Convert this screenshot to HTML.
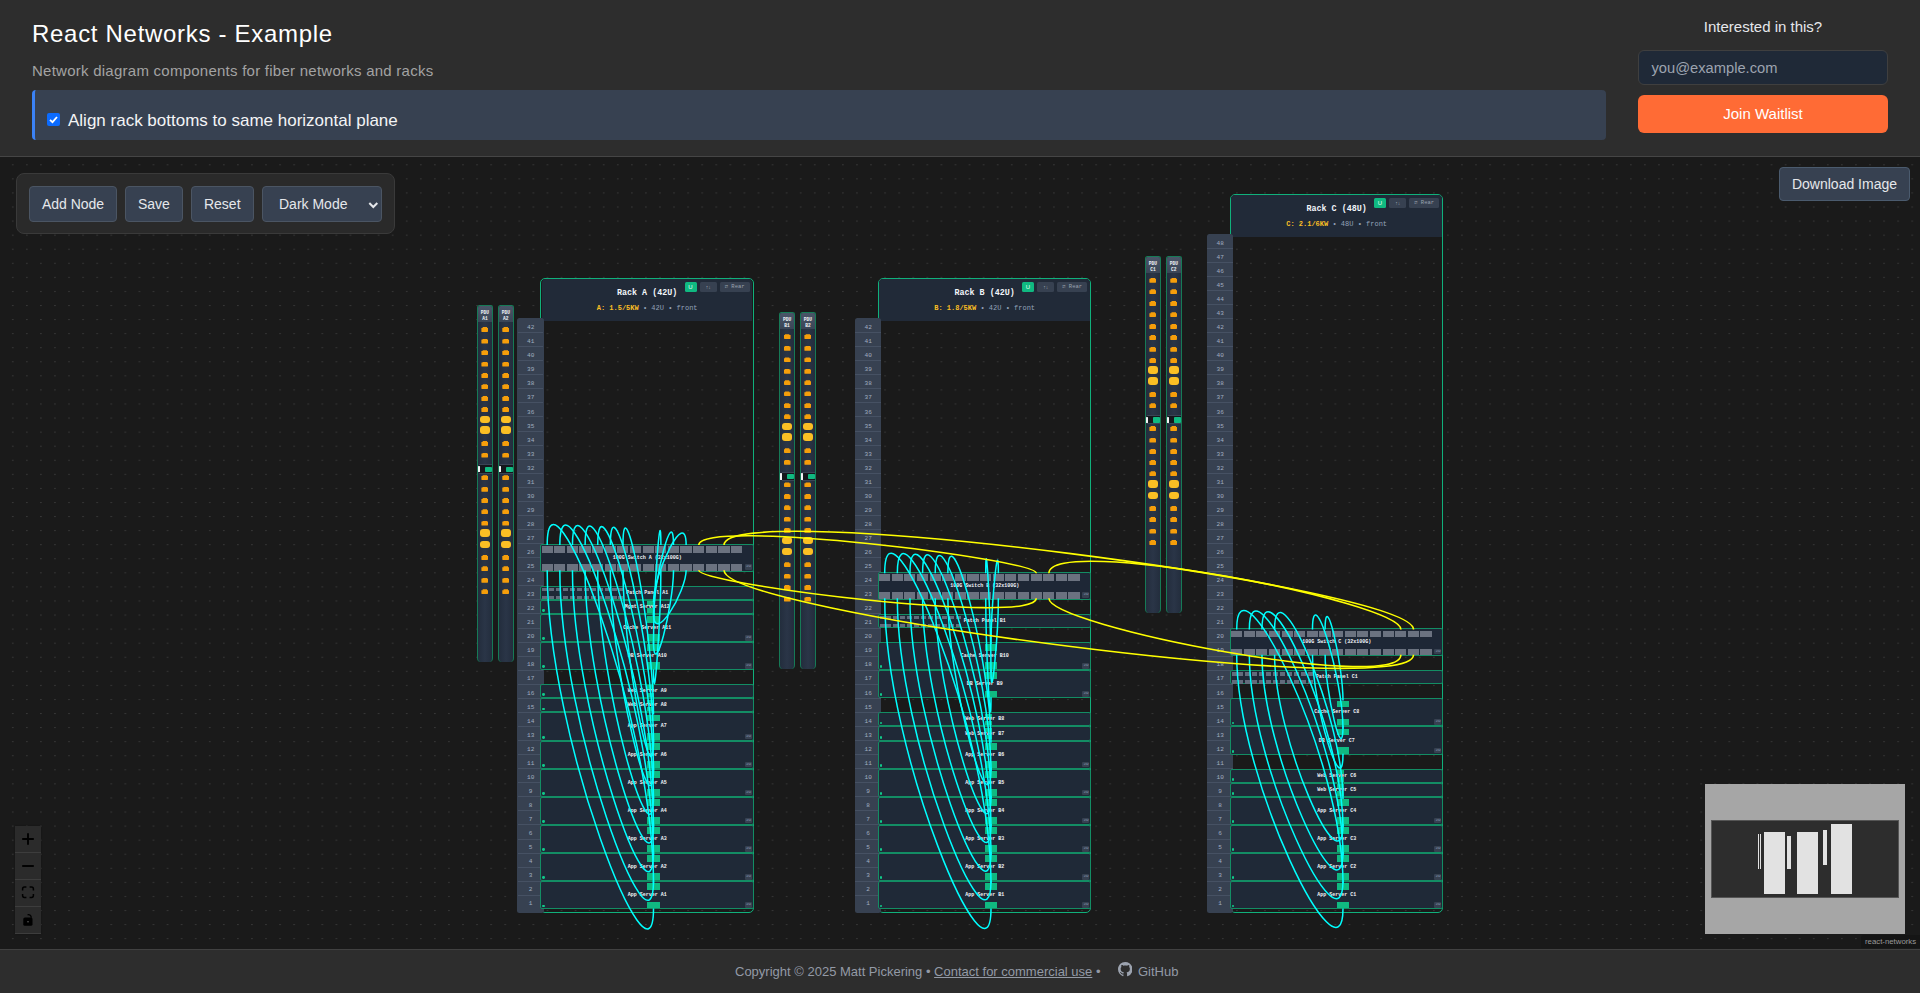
<!DOCTYPE html><html><head><meta charset="utf-8"><style>
*{box-sizing:border-box;}
html,body{margin:0;padding:0;width:1920px;height:993px;overflow:hidden;background:#1a1a1a;font-family:"Liberation Sans",sans-serif;}
.a{position:absolute;}
#hdr{left:0;top:0;width:1920px;height:157px;background:#2d2d2d;border-bottom:1px solid #454545;}
#title{left:32px;top:20px;font-size:24px;letter-spacing:0.7px;color:#fff;white-space:nowrap;}
#sub{left:32px;top:62px;font-size:15px;letter-spacing:0.25px;color:#a3a3a3;white-space:nowrap;}
#bar{left:32px;top:90px;width:1574px;height:50px;background:#374151;border-left:3px solid #3b82f6;border-radius:4px;}
#cb{left:47px;top:113px;width:13px;height:13px;background:#0b6bff;border-radius:2px;}
#cbt{left:68px;top:111px;font-size:17px;color:#f3f4f6;white-space:nowrap;}
#int{left:1638px;width:250px;top:18px;text-align:center;font-size:15px;color:#e5e7eb;}
#email{left:1638px;top:50px;width:250px;height:35px;background:#1f2937;border:1px solid #3f3f3f;border-radius:6px;color:#9ca3af;font-size:14.7px;padding:9px 0 0 12.5px;}
#join{left:1638px;top:95px;width:250px;height:38px;background:#ff6b35;border-radius:6px;color:#fff;font-size:15px;text-align:center;padding-top:10px;}
#ftr{left:0;top:949px;width:1920px;height:44px;background:#2d2d2d;border-top:1px solid #414141;}
.btn{background:#374151;border:1px solid #4b5563;border-radius:4px;color:#e5e7eb;font-size:14px;text-align:center;}
.mono{font-family:"Liberation Mono",monospace;}
.rk{border:1.4px solid #10b07b;border-radius:5px;}
.rh{background:#212a38;}
.ucol{background:#374151;border-radius:2.5px;}
.ur{border-top:1px solid #465163;color:#a0aec0;font-size:6.1px;text-align:center;}
.dev{background:#1f2937;border:1.25px solid #138d64;border-radius:2px;}
.pdu{background:linear-gradient(90deg,#232d3d,#2a3547 50%,#232d3d);border:1px solid #167a56;border-bottom:none;border-radius:2.5px 2.5px 4px 4px;}
.out{background:#f59e0b;border-radius:0.8px;clip-path:polygon(18% 0,82% 0,82% 18%,100% 18%,100% 100%,0 100%,0 18%,18% 18%);}
.outb{background:#fbbf24;border-radius:3px;}
.sp{background:#6b7280;}
.hp{background:#10b981;}
.lbl{color:#f1f5f9;font-weight:bold;font-size:5px;line-height:6px;white-space:nowrap;text-align:center;}
</style></head><body><div id="hdr" class="a"></div><div id="title" class="a">React Networks - Example</div><div id="sub" class="a">Network diagram components for fiber networks and racks</div><div id="bar" class="a"></div><div id="cb" class="a"><svg width="13" height="13" style="position:absolute;left:0;top:0"><path d="M3 6.8 L5.5 9.2 L10 4" stroke="#fff" stroke-width="1.8" fill="none"/></svg></div><div id="cbt" class="a">Align rack bottoms to same horizontal plane</div><div id="int" class="a">Interested in this?</div><div id="email" class="a">you@example.com</div><div id="join" class="a">Join Waitlist</div><svg class="a" style="left:0;top:157px" width="1920" height="791"><defs><pattern id="dots" patternUnits="userSpaceOnUse" x="11.9" y="7.3" width="14.07" height="14.07"><rect x="0" y="0" width="1.7" height="1" fill="#373737"/></pattern></defs><rect width="1920" height="791" fill="#1a1a1a"/><rect width="1920" height="791" fill="url(#dots)"/></svg><div class="a pdu" style="left:477.1px;top:305.2px;width:15.6px;height:356.5px"></div><div class="a" style="left:478.1px;top:306.2px;width:13.6px;height:16px;background:linear-gradient(#4a5568,#3a4556);border-radius:2px 2px 0 0"></div><div class="a mono" style="left:477.1px;top:309.8px;width:15.6px;font-size:4.6px;line-height:6.1px;color:#f1f5f9;text-align:center;font-weight:bold">PDU<br>A1</div><div class="a out" style="left:481.4px;top:327px;width:7px;height:5px"></div><div class="a out" style="left:481.4px;top:338.5px;width:7px;height:5px"></div><div class="a out" style="left:481.4px;top:350.2px;width:7px;height:5px"></div><div class="a out" style="left:481.4px;top:361.5px;width:7px;height:5px"></div><div class="a out" style="left:481.4px;top:373.1px;width:7px;height:5px"></div><div class="a out" style="left:481.4px;top:384.2px;width:7px;height:5px"></div><div class="a out" style="left:481.4px;top:396px;width:7px;height:5px"></div><div class="a out" style="left:481.4px;top:407.1px;width:7px;height:5px"></div><div class="a outb" style="left:479.65px;top:415.65px;width:10.5px;height:7.5px"></div><div class="a outb" style="left:479.65px;top:426.25px;width:10.5px;height:7.5px"></div><div class="a out" style="left:481.4px;top:441.1px;width:7px;height:5px"></div><div class="a out" style="left:481.4px;top:452.5px;width:7px;height:5px"></div><div class="a out" style="left:481.4px;top:475.2px;width:7px;height:5px"></div><div class="a out" style="left:481.4px;top:486.7px;width:7px;height:5px"></div><div class="a out" style="left:481.4px;top:498.1px;width:7px;height:5px"></div><div class="a out" style="left:481.4px;top:509.3px;width:7px;height:5px"></div><div class="a out" style="left:481.4px;top:520.5px;width:7px;height:5px"></div><div class="a outb" style="left:479.65px;top:529.45px;width:10.5px;height:7.5px"></div><div class="a outb" style="left:479.65px;top:540.75px;width:10.5px;height:7.5px"></div><div class="a out" style="left:481.4px;top:555.1px;width:7px;height:5px"></div><div class="a out" style="left:481.4px;top:566.3px;width:7px;height:5px"></div><div class="a out" style="left:481.4px;top:577.7px;width:7px;height:5px"></div><div class="a out" style="left:481.4px;top:589.3px;width:7px;height:5px"></div><div class="a" style="left:479.4px;top:464.4px;width:12.3px;height:9.3px;background:#15171c;border-top:0.6px solid #3a4455;border-bottom:0.6px solid #3a4455"></div><div class="a" style="left:477.6px;top:465.9px;width:2.4px;height:6.6px;background:#f3f4f6;border-radius:0.5px"></div><div class="a" style="left:484.7px;top:466.5px;width:7.2px;height:5.5px;background:#10b981;border-radius:0.8px"></div><div class="a pdu" style="left:498px;top:305.2px;width:15.6px;height:356.5px"></div><div class="a" style="left:499px;top:306.2px;width:13.6px;height:16px;background:linear-gradient(#4a5568,#3a4556);border-radius:2px 2px 0 0"></div><div class="a mono" style="left:498px;top:309.8px;width:15.6px;font-size:4.6px;line-height:6.1px;color:#f1f5f9;text-align:center;font-weight:bold">PDU<br>A2</div><div class="a out" style="left:502.3px;top:327px;width:7px;height:5px"></div><div class="a out" style="left:502.3px;top:338.5px;width:7px;height:5px"></div><div class="a out" style="left:502.3px;top:350.2px;width:7px;height:5px"></div><div class="a out" style="left:502.3px;top:361.5px;width:7px;height:5px"></div><div class="a out" style="left:502.3px;top:373.1px;width:7px;height:5px"></div><div class="a out" style="left:502.3px;top:384.2px;width:7px;height:5px"></div><div class="a out" style="left:502.3px;top:396px;width:7px;height:5px"></div><div class="a out" style="left:502.3px;top:407.1px;width:7px;height:5px"></div><div class="a outb" style="left:500.55px;top:415.65px;width:10.5px;height:7.5px"></div><div class="a outb" style="left:500.55px;top:426.25px;width:10.5px;height:7.5px"></div><div class="a out" style="left:502.3px;top:441.1px;width:7px;height:5px"></div><div class="a out" style="left:502.3px;top:452.5px;width:7px;height:5px"></div><div class="a out" style="left:502.3px;top:475.2px;width:7px;height:5px"></div><div class="a out" style="left:502.3px;top:486.7px;width:7px;height:5px"></div><div class="a out" style="left:502.3px;top:498.1px;width:7px;height:5px"></div><div class="a out" style="left:502.3px;top:509.3px;width:7px;height:5px"></div><div class="a out" style="left:502.3px;top:520.5px;width:7px;height:5px"></div><div class="a outb" style="left:500.55px;top:529.45px;width:10.5px;height:7.5px"></div><div class="a outb" style="left:500.55px;top:540.75px;width:10.5px;height:7.5px"></div><div class="a out" style="left:502.3px;top:555.1px;width:7px;height:5px"></div><div class="a out" style="left:502.3px;top:566.3px;width:7px;height:5px"></div><div class="a out" style="left:502.3px;top:577.7px;width:7px;height:5px"></div><div class="a out" style="left:502.3px;top:589.3px;width:7px;height:5px"></div><div class="a" style="left:500.3px;top:464.4px;width:12.3px;height:9.3px;background:#15171c;border-top:0.6px solid #3a4455;border-bottom:0.6px solid #3a4455"></div><div class="a" style="left:498.5px;top:465.9px;width:2.4px;height:6.6px;background:#f3f4f6;border-radius:0.5px"></div><div class="a" style="left:505.6px;top:466.5px;width:7.2px;height:5.5px;background:#10b981;border-radius:0.8px"></div><div class="a rk" style="left:540.4px;top:277.9px;width:213.5px;height:634.9px"></div><div class="a rh" style="left:541.8px;top:279.3px;width:210.7px;height:41.9px;border-radius:4px 4px 0 0"></div><div class="a ucol" style="left:517.4px;top:318.46px;width:26.3px;height:594.34px"></div><div class="a mono" style="left:517.8px;top:319.22px;width:25.6px;height:14.07px;line-height:17.87px;padding-left:0.2px;color:#a0aec0;font-size:6.1px;text-align:center">42</div><div class="a" style="left:517.8px;top:332.03px;width:25.6px;height:1px;background:#465163"></div><div class="a mono" style="left:517.8px;top:333.27px;width:25.6px;height:14.07px;line-height:17.87px;padding-left:0.2px;color:#a0aec0;font-size:6.1px;text-align:center">41</div><div class="a" style="left:517.8px;top:346.1px;width:25.6px;height:1px;background:#465163"></div><div class="a mono" style="left:517.8px;top:347.32px;width:25.6px;height:14.07px;line-height:17.87px;padding-left:0.2px;color:#a0aec0;font-size:6.1px;text-align:center">40</div><div class="a" style="left:517.8px;top:360.17px;width:25.6px;height:1px;background:#465163"></div><div class="a mono" style="left:517.8px;top:361.37px;width:25.6px;height:14.07px;line-height:17.87px;padding-left:0.2px;color:#a0aec0;font-size:6.1px;text-align:center">39</div><div class="a" style="left:517.8px;top:374.24px;width:25.6px;height:1px;background:#465163"></div><div class="a mono" style="left:517.8px;top:375.42px;width:25.6px;height:14.07px;line-height:17.87px;padding-left:0.2px;color:#a0aec0;font-size:6.1px;text-align:center">38</div><div class="a" style="left:517.8px;top:388.31px;width:25.6px;height:1px;background:#465163"></div><div class="a mono" style="left:517.8px;top:389.47px;width:25.6px;height:14.07px;line-height:17.87px;padding-left:0.2px;color:#a0aec0;font-size:6.1px;text-align:center">37</div><div class="a" style="left:517.8px;top:402.38px;width:25.6px;height:1px;background:#465163"></div><div class="a mono" style="left:517.8px;top:403.51px;width:25.6px;height:14.07px;line-height:17.87px;padding-left:0.2px;color:#a0aec0;font-size:6.1px;text-align:center">36</div><div class="a" style="left:517.8px;top:416.45px;width:25.6px;height:1px;background:#465163"></div><div class="a mono" style="left:517.8px;top:417.56px;width:25.6px;height:14.07px;line-height:17.87px;padding-left:0.2px;color:#a0aec0;font-size:6.1px;text-align:center">35</div><div class="a" style="left:517.8px;top:430.52px;width:25.6px;height:1px;background:#465163"></div><div class="a mono" style="left:517.8px;top:431.61px;width:25.6px;height:14.07px;line-height:17.87px;padding-left:0.2px;color:#a0aec0;font-size:6.1px;text-align:center">34</div><div class="a" style="left:517.8px;top:444.59px;width:25.6px;height:1px;background:#465163"></div><div class="a mono" style="left:517.8px;top:445.66px;width:25.6px;height:14.07px;line-height:17.87px;padding-left:0.2px;color:#a0aec0;font-size:6.1px;text-align:center">33</div><div class="a" style="left:517.8px;top:458.66px;width:25.6px;height:1px;background:#465163"></div><div class="a mono" style="left:517.8px;top:459.71px;width:25.6px;height:14.07px;line-height:17.87px;padding-left:0.2px;color:#a0aec0;font-size:6.1px;text-align:center">32</div><div class="a" style="left:517.8px;top:472.73px;width:25.6px;height:1px;background:#465163"></div><div class="a mono" style="left:517.8px;top:473.76px;width:25.6px;height:14.07px;line-height:17.87px;padding-left:0.2px;color:#a0aec0;font-size:6.1px;text-align:center">31</div><div class="a" style="left:517.8px;top:486.8px;width:25.6px;height:1px;background:#465163"></div><div class="a mono" style="left:517.8px;top:487.81px;width:25.6px;height:14.07px;line-height:17.87px;padding-left:0.2px;color:#a0aec0;font-size:6.1px;text-align:center">30</div><div class="a" style="left:517.8px;top:500.87px;width:25.6px;height:1px;background:#465163"></div><div class="a mono" style="left:517.8px;top:501.86px;width:25.6px;height:14.07px;line-height:17.87px;padding-left:0.2px;color:#a0aec0;font-size:6.1px;text-align:center">29</div><div class="a" style="left:517.8px;top:514.94px;width:25.6px;height:1px;background:#465163"></div><div class="a mono" style="left:517.8px;top:515.91px;width:25.6px;height:14.07px;line-height:17.87px;padding-left:0.2px;color:#a0aec0;font-size:6.1px;text-align:center">28</div><div class="a" style="left:517.8px;top:529.01px;width:25.6px;height:1px;background:#465163"></div><div class="a mono" style="left:517.8px;top:529.96px;width:25.6px;height:14.07px;line-height:17.87px;padding-left:0.2px;color:#a0aec0;font-size:6.1px;text-align:center">27</div><div class="a" style="left:517.8px;top:543.08px;width:25.6px;height:1px;background:#465163"></div><div class="a mono" style="left:517.8px;top:544px;width:25.6px;height:14.07px;line-height:17.87px;padding-left:0.2px;color:#a0aec0;font-size:6.1px;text-align:center">26</div><div class="a" style="left:517.8px;top:557.15px;width:25.6px;height:1px;background:#465163"></div><div class="a mono" style="left:517.8px;top:558.05px;width:25.6px;height:14.07px;line-height:17.87px;padding-left:0.2px;color:#a0aec0;font-size:6.1px;text-align:center">25</div><div class="a" style="left:517.8px;top:571.22px;width:25.6px;height:1px;background:#465163"></div><div class="a mono" style="left:517.8px;top:572.1px;width:25.6px;height:14.07px;line-height:17.87px;padding-left:0.2px;color:#a0aec0;font-size:6.1px;text-align:center">24</div><div class="a" style="left:517.8px;top:585.29px;width:25.6px;height:1px;background:#465163"></div><div class="a mono" style="left:517.8px;top:586.15px;width:25.6px;height:14.07px;line-height:17.87px;padding-left:0.2px;color:#a0aec0;font-size:6.1px;text-align:center">23</div><div class="a" style="left:517.8px;top:599.36px;width:25.6px;height:1px;background:#465163"></div><div class="a mono" style="left:517.8px;top:600.2px;width:25.6px;height:14.07px;line-height:17.87px;padding-left:0.2px;color:#a0aec0;font-size:6.1px;text-align:center">22</div><div class="a" style="left:517.8px;top:613.43px;width:25.6px;height:1px;background:#465163"></div><div class="a mono" style="left:517.8px;top:614.25px;width:25.6px;height:14.07px;line-height:17.87px;padding-left:0.2px;color:#a0aec0;font-size:6.1px;text-align:center">21</div><div class="a" style="left:517.8px;top:627.5px;width:25.6px;height:1px;background:#465163"></div><div class="a mono" style="left:517.8px;top:628.3px;width:25.6px;height:14.07px;line-height:17.87px;padding-left:0.2px;color:#a0aec0;font-size:6.1px;text-align:center">20</div><div class="a" style="left:517.8px;top:641.57px;width:25.6px;height:1px;background:#465163"></div><div class="a mono" style="left:517.8px;top:642.35px;width:25.6px;height:14.07px;line-height:17.87px;padding-left:0.2px;color:#a0aec0;font-size:6.1px;text-align:center">19</div><div class="a" style="left:517.8px;top:655.64px;width:25.6px;height:1px;background:#465163"></div><div class="a mono" style="left:517.8px;top:656.4px;width:25.6px;height:14.07px;line-height:17.87px;padding-left:0.2px;color:#a0aec0;font-size:6.1px;text-align:center">18</div><div class="a" style="left:517.8px;top:669.71px;width:25.6px;height:1px;background:#465163"></div><div class="a mono" style="left:517.8px;top:670.45px;width:25.6px;height:14.07px;line-height:17.87px;padding-left:0.2px;color:#a0aec0;font-size:6.1px;text-align:center">17</div><div class="a" style="left:517.8px;top:683.78px;width:25.6px;height:1px;background:#465163"></div><div class="a mono" style="left:517.8px;top:684.5px;width:25.6px;height:14.07px;line-height:17.87px;padding-left:0.2px;color:#a0aec0;font-size:6.1px;text-align:center">16</div><div class="a" style="left:517.8px;top:697.85px;width:25.6px;height:1px;background:#465163"></div><div class="a mono" style="left:517.8px;top:698.54px;width:25.6px;height:14.07px;line-height:17.87px;padding-left:0.2px;color:#a0aec0;font-size:6.1px;text-align:center">15</div><div class="a" style="left:517.8px;top:711.92px;width:25.6px;height:1px;background:#465163"></div><div class="a mono" style="left:517.8px;top:712.59px;width:25.6px;height:14.07px;line-height:17.87px;padding-left:0.2px;color:#a0aec0;font-size:6.1px;text-align:center">14</div><div class="a" style="left:517.8px;top:725.99px;width:25.6px;height:1px;background:#465163"></div><div class="a mono" style="left:517.8px;top:726.64px;width:25.6px;height:14.07px;line-height:17.87px;padding-left:0.2px;color:#a0aec0;font-size:6.1px;text-align:center">13</div><div class="a" style="left:517.8px;top:740.06px;width:25.6px;height:1px;background:#465163"></div><div class="a mono" style="left:517.8px;top:740.69px;width:25.6px;height:14.07px;line-height:17.87px;padding-left:0.2px;color:#a0aec0;font-size:6.1px;text-align:center">12</div><div class="a" style="left:517.8px;top:754.13px;width:25.6px;height:1px;background:#465163"></div><div class="a mono" style="left:517.8px;top:754.74px;width:25.6px;height:14.07px;line-height:17.87px;padding-left:0.2px;color:#a0aec0;font-size:6.1px;text-align:center">11</div><div class="a" style="left:517.8px;top:768.2px;width:25.6px;height:1px;background:#465163"></div><div class="a mono" style="left:517.8px;top:768.79px;width:25.6px;height:14.07px;line-height:17.87px;padding-left:0.2px;color:#a0aec0;font-size:6.1px;text-align:center">10</div><div class="a" style="left:517.8px;top:782.27px;width:25.6px;height:1px;background:#465163"></div><div class="a mono" style="left:517.8px;top:782.84px;width:25.6px;height:14.07px;line-height:17.87px;padding-left:0.2px;color:#a0aec0;font-size:6.1px;text-align:center">9</div><div class="a" style="left:517.8px;top:796.34px;width:25.6px;height:1px;background:#465163"></div><div class="a mono" style="left:517.8px;top:796.89px;width:25.6px;height:14.07px;line-height:17.87px;padding-left:0.2px;color:#a0aec0;font-size:6.1px;text-align:center">8</div><div class="a" style="left:517.8px;top:810.41px;width:25.6px;height:1px;background:#465163"></div><div class="a mono" style="left:517.8px;top:810.94px;width:25.6px;height:14.07px;line-height:17.87px;padding-left:0.2px;color:#a0aec0;font-size:6.1px;text-align:center">7</div><div class="a" style="left:517.8px;top:824.48px;width:25.6px;height:1px;background:#465163"></div><div class="a mono" style="left:517.8px;top:824.99px;width:25.6px;height:14.07px;line-height:17.87px;padding-left:0.2px;color:#a0aec0;font-size:6.1px;text-align:center">6</div><div class="a" style="left:517.8px;top:838.55px;width:25.6px;height:1px;background:#465163"></div><div class="a mono" style="left:517.8px;top:839.03px;width:25.6px;height:14.07px;line-height:17.87px;padding-left:0.2px;color:#a0aec0;font-size:6.1px;text-align:center">5</div><div class="a" style="left:517.8px;top:852.62px;width:25.6px;height:1px;background:#465163"></div><div class="a mono" style="left:517.8px;top:853.08px;width:25.6px;height:14.07px;line-height:17.87px;padding-left:0.2px;color:#a0aec0;font-size:6.1px;text-align:center">4</div><div class="a" style="left:517.8px;top:866.69px;width:25.6px;height:1px;background:#465163"></div><div class="a mono" style="left:517.8px;top:867.13px;width:25.6px;height:14.07px;line-height:17.87px;padding-left:0.2px;color:#a0aec0;font-size:6.1px;text-align:center">3</div><div class="a" style="left:517.8px;top:880.76px;width:25.6px;height:1px;background:#465163"></div><div class="a mono" style="left:517.8px;top:881.18px;width:25.6px;height:14.07px;line-height:17.87px;padding-left:0.2px;color:#a0aec0;font-size:6.1px;text-align:center">2</div><div class="a" style="left:517.8px;top:894.83px;width:25.6px;height:1px;background:#465163"></div><div class="a mono" style="left:517.8px;top:895.23px;width:25.6px;height:14.07px;line-height:17.87px;padding-left:0.2px;color:#a0aec0;font-size:6.1px;text-align:center">1</div><div class="a mono" style="left:587.15px;top:288.4px;width:120px;text-align:center;font-size:8.4px;font-weight:bold;color:#f1f5f9">Rack A (42U)</div><div class="a mono" style="left:577.15px;top:304.2px;width:140px;text-align:center;font-size:7px;color:#94a3b8;white-space:nowrap"><span style="color:#fbbf24;font-weight:bold">A: 1.5/5KW</span> &#8226; 42U &#8226; front</div><div class="a" style="left:684.5px;top:282px;width:12px;height:9.8px;background:#10b981;border-radius:1.5px;color:#e6fff5;font-size:6px;text-align:center;line-height:10px" class="mono">U</div><div class="a" style="left:699.8px;top:282px;width:16.8px;height:9.8px;background:#374151;border-radius:1.5px;color:#9ca3af;font-size:5px;text-align:center;line-height:10px">&#8593;&#8595;</div><div class="a mono" style="left:719.5px;top:282px;width:30.3px;height:9.8px;background:#374151;border-radius:1.5px;color:#9ca3af;font-size:5.5px;text-align:center;line-height:10px">&#8644; Rear</div><div class="a dev" style="left:540.4px;top:543.58px;width:213.5px;height:28.14px;background:#1e2736"></div><div class="a sp" style="left:541.5px;top:546.08px;width:11.2px;height:6.5px"></div><div class="a sp" style="left:541.5px;top:564.22px;width:11.2px;height:6.5px"></div><div class="a sp" style="left:554.13px;top:546.08px;width:11.2px;height:6.5px"></div><div class="a sp" style="left:554.13px;top:564.22px;width:11.2px;height:6.5px"></div><div class="a sp" style="left:566.76px;top:546.08px;width:11.2px;height:6.5px"></div><div class="a sp" style="left:566.76px;top:564.22px;width:11.2px;height:6.5px"></div><div class="a sp" style="left:579.39px;top:546.08px;width:11.2px;height:6.5px"></div><div class="a sp" style="left:579.39px;top:564.22px;width:11.2px;height:6.5px"></div><div class="a sp" style="left:592.02px;top:546.08px;width:11.2px;height:6.5px"></div><div class="a sp" style="left:592.02px;top:564.22px;width:11.2px;height:6.5px"></div><div class="a sp" style="left:604.65px;top:546.08px;width:11.2px;height:6.5px"></div><div class="a sp" style="left:604.65px;top:564.22px;width:11.2px;height:6.5px"></div><div class="a sp" style="left:617.28px;top:546.08px;width:11.2px;height:6.5px"></div><div class="a sp" style="left:617.28px;top:564.22px;width:11.2px;height:6.5px"></div><div class="a sp" style="left:629.91px;top:546.08px;width:11.2px;height:6.5px"></div><div class="a sp" style="left:629.91px;top:564.22px;width:11.2px;height:6.5px"></div><div class="a sp" style="left:642.54px;top:546.08px;width:11.2px;height:6.5px"></div><div class="a sp" style="left:642.54px;top:564.22px;width:11.2px;height:6.5px"></div><div class="a sp" style="left:655.17px;top:546.08px;width:11.2px;height:6.5px"></div><div class="a sp" style="left:655.17px;top:564.22px;width:11.2px;height:6.5px"></div><div class="a sp" style="left:667.8px;top:546.08px;width:11.2px;height:6.5px"></div><div class="a sp" style="left:667.8px;top:564.22px;width:11.2px;height:6.5px"></div><div class="a sp" style="left:680.43px;top:546.08px;width:11.2px;height:6.5px"></div><div class="a sp" style="left:680.43px;top:564.22px;width:11.2px;height:6.5px"></div><div class="a sp" style="left:693.06px;top:546.08px;width:11.2px;height:6.5px"></div><div class="a sp" style="left:693.06px;top:564.22px;width:11.2px;height:6.5px"></div><div class="a sp" style="left:705.69px;top:546.08px;width:11.2px;height:6.5px"></div><div class="a sp" style="left:705.69px;top:564.22px;width:11.2px;height:6.5px"></div><div class="a sp" style="left:718.32px;top:546.08px;width:11.2px;height:6.5px"></div><div class="a sp" style="left:718.32px;top:564.22px;width:11.2px;height:6.5px"></div><div class="a sp" style="left:730.95px;top:546.08px;width:11.2px;height:6.5px"></div><div class="a sp" style="left:730.95px;top:564.22px;width:11.2px;height:6.5px"></div><div class="a lbl mono" style="left:540.4px;top:554.65px;width:213.5px">100G Switch A (32x100G)</div><div class="a mono" style="left:744.9px;top:564.22px;width:7px;height:5.5px;background:#374151;border-radius:1px;font-size:4.2px;line-height:5.7px;color:#8fa0b8;text-align:center">2U</div><div class="a dev" style="left:540.4px;top:585.79px;width:213.5px;height:14.07px"></div><div class="a" style="left:542px;top:587.59px;width:5px;height:3.7px;background:#626b7b"></div><div class="a" style="left:548.95px;top:587.59px;width:5px;height:3.7px;background:#626b7b"></div><div class="a" style="left:555.9px;top:587.59px;width:5px;height:3.7px;background:#626b7b"></div><div class="a" style="left:562.85px;top:587.59px;width:5px;height:3.7px;background:#626b7b"></div><div class="a" style="left:569.8px;top:587.59px;width:5px;height:3.7px;background:#626b7b"></div><div class="a" style="left:576.75px;top:587.59px;width:5px;height:3.7px;background:#626b7b"></div><div class="a" style="left:583.7px;top:587.59px;width:5px;height:3.7px;background:#626b7b"></div><div class="a" style="left:590.65px;top:587.59px;width:5px;height:3.7px;background:#626b7b"></div><div class="a" style="left:597.6px;top:587.59px;width:5px;height:3.7px;background:#626b7b"></div><div class="a" style="left:604.55px;top:587.59px;width:5px;height:3.7px;background:#626b7b"></div><div class="a" style="left:611.5px;top:587.59px;width:5px;height:3.7px;background:#626b7b"></div><div class="a" style="left:618.45px;top:587.59px;width:5px;height:3.7px;background:#626b7b"></div><div class="a" style="left:542px;top:595.59px;width:5px;height:3.7px;background:#626b7b"></div><div class="a" style="left:548.95px;top:595.59px;width:5px;height:3.7px;background:#626b7b"></div><div class="a" style="left:555.9px;top:595.59px;width:5px;height:3.7px;background:#626b7b"></div><div class="a" style="left:562.85px;top:595.59px;width:5px;height:3.7px;background:#626b7b"></div><div class="a" style="left:569.8px;top:595.59px;width:5px;height:3.7px;background:#626b7b"></div><div class="a" style="left:576.75px;top:595.59px;width:5px;height:3.7px;background:#626b7b"></div><div class="a" style="left:583.7px;top:595.59px;width:5px;height:3.7px;background:#626b7b"></div><div class="a" style="left:590.65px;top:595.59px;width:5px;height:3.7px;background:#626b7b"></div><div class="a" style="left:597.6px;top:595.59px;width:5px;height:3.7px;background:#626b7b"></div><div class="a" style="left:604.55px;top:595.59px;width:5px;height:3.7px;background:#626b7b"></div><div class="a" style="left:611.5px;top:595.59px;width:5px;height:3.7px;background:#626b7b"></div><div class="a" style="left:618.45px;top:595.59px;width:5px;height:3.7px;background:#626b7b"></div><div class="a lbl mono" style="left:540.4px;top:589.82px;width:213.5px">Patch Panel A1</div><div class="a dev" style="left:540.4px;top:599.86px;width:213.5px;height:14.07px"></div><div class="a hp" style="left:647.1px;top:601.06px;width:7px;height:4.6px"></div><div class="a hp" style="left:647.1px;top:608.13px;width:7px;height:4.6px"></div><div class="a" style="left:542.3px;top:609.03px;width:2.7px;height:2.9px;border-radius:50%;background:#10c98a"></div><div class="a lbl mono" style="left:540.4px;top:603.89px;width:213.5px">Mgmt Server A12</div><div class="a dev" style="left:540.4px;top:613.93px;width:213.5px;height:28.14px"></div><div class="a hp" style="left:647.1px;top:616.13px;width:12.8px;height:6.8px"></div><div class="a hp" style="left:647.1px;top:634.27px;width:12.8px;height:6.8px"></div><div class="a mono" style="left:744.9px;top:635.07px;width:7px;height:5.5px;background:#374151;border-radius:1px;font-size:4.2px;line-height:5.7px;color:#8fa0b8;text-align:center">2U</div><div class="a" style="left:542.3px;top:637.17px;width:2.7px;height:2.9px;border-radius:50%;background:#10c98a"></div><div class="a lbl mono" style="left:540.4px;top:625px;width:213.5px">Cache Server A11</div><div class="a dev" style="left:540.4px;top:642.07px;width:213.5px;height:28.14px"></div><div class="a hp" style="left:647.1px;top:644.27px;width:12.8px;height:6.8px"></div><div class="a hp" style="left:647.1px;top:662.41px;width:12.8px;height:6.8px"></div><div class="a mono" style="left:744.9px;top:663.21px;width:7px;height:5.5px;background:#374151;border-radius:1px;font-size:4.2px;line-height:5.7px;color:#8fa0b8;text-align:center">2U</div><div class="a" style="left:542.3px;top:665.31px;width:2.7px;height:2.9px;border-radius:50%;background:#10c98a"></div><div class="a lbl mono" style="left:540.4px;top:653.14px;width:213.5px">DB Server A10</div><div class="a dev" style="left:540.4px;top:684.28px;width:213.5px;height:14.07px"></div><div class="a hp" style="left:647.1px;top:685.48px;width:7px;height:4.6px"></div><div class="a hp" style="left:647.1px;top:692.55px;width:7px;height:4.6px"></div><div class="a" style="left:542.3px;top:693.45px;width:2.7px;height:2.9px;border-radius:50%;background:#10c98a"></div><div class="a lbl mono" style="left:540.4px;top:688.31px;width:213.5px">Web Server A9</div><div class="a dev" style="left:540.4px;top:698.35px;width:213.5px;height:14.07px"></div><div class="a hp" style="left:647.1px;top:699.55px;width:7px;height:4.6px"></div><div class="a hp" style="left:647.1px;top:706.62px;width:7px;height:4.6px"></div><div class="a" style="left:542.3px;top:707.52px;width:2.7px;height:2.9px;border-radius:50%;background:#10c98a"></div><div class="a lbl mono" style="left:540.4px;top:702.38px;width:213.5px">Web Server A8</div><div class="a dev" style="left:540.4px;top:712.42px;width:213.5px;height:28.14px"></div><div class="a hp" style="left:647.1px;top:714.62px;width:12.8px;height:6.8px"></div><div class="a hp" style="left:647.1px;top:732.76px;width:12.8px;height:6.8px"></div><div class="a mono" style="left:744.9px;top:733.56px;width:7px;height:5.5px;background:#374151;border-radius:1px;font-size:4.2px;line-height:5.7px;color:#8fa0b8;text-align:center">2U</div><div class="a" style="left:542.3px;top:735.66px;width:2.7px;height:2.9px;border-radius:50%;background:#10c98a"></div><div class="a lbl mono" style="left:540.4px;top:723.49px;width:213.5px">App Server A7</div><div class="a dev" style="left:540.4px;top:740.56px;width:213.5px;height:28.14px"></div><div class="a hp" style="left:647.1px;top:742.76px;width:12.8px;height:6.8px"></div><div class="a hp" style="left:647.1px;top:760.9px;width:12.8px;height:6.8px"></div><div class="a mono" style="left:744.9px;top:761.7px;width:7px;height:5.5px;background:#374151;border-radius:1px;font-size:4.2px;line-height:5.7px;color:#8fa0b8;text-align:center">2U</div><div class="a" style="left:542.3px;top:763.8px;width:2.7px;height:2.9px;border-radius:50%;background:#10c98a"></div><div class="a lbl mono" style="left:540.4px;top:751.63px;width:213.5px">App Server A6</div><div class="a dev" style="left:540.4px;top:768.7px;width:213.5px;height:28.14px"></div><div class="a hp" style="left:647.1px;top:770.9px;width:12.8px;height:6.8px"></div><div class="a hp" style="left:647.1px;top:789.04px;width:12.8px;height:6.8px"></div><div class="a mono" style="left:744.9px;top:789.84px;width:7px;height:5.5px;background:#374151;border-radius:1px;font-size:4.2px;line-height:5.7px;color:#8fa0b8;text-align:center">2U</div><div class="a" style="left:542.3px;top:791.94px;width:2.7px;height:2.9px;border-radius:50%;background:#10c98a"></div><div class="a lbl mono" style="left:540.4px;top:779.77px;width:213.5px">App Server A5</div><div class="a dev" style="left:540.4px;top:796.84px;width:213.5px;height:28.14px"></div><div class="a hp" style="left:647.1px;top:799.04px;width:12.8px;height:6.8px"></div><div class="a hp" style="left:647.1px;top:817.18px;width:12.8px;height:6.8px"></div><div class="a mono" style="left:744.9px;top:817.98px;width:7px;height:5.5px;background:#374151;border-radius:1px;font-size:4.2px;line-height:5.7px;color:#8fa0b8;text-align:center">2U</div><div class="a" style="left:542.3px;top:820.08px;width:2.7px;height:2.9px;border-radius:50%;background:#10c98a"></div><div class="a lbl mono" style="left:540.4px;top:807.91px;width:213.5px">App Server A4</div><div class="a dev" style="left:540.4px;top:824.98px;width:213.5px;height:28.14px"></div><div class="a hp" style="left:647.1px;top:827.18px;width:12.8px;height:6.8px"></div><div class="a hp" style="left:647.1px;top:845.32px;width:12.8px;height:6.8px"></div><div class="a mono" style="left:744.9px;top:846.12px;width:7px;height:5.5px;background:#374151;border-radius:1px;font-size:4.2px;line-height:5.7px;color:#8fa0b8;text-align:center">2U</div><div class="a" style="left:542.3px;top:848.22px;width:2.7px;height:2.9px;border-radius:50%;background:#10c98a"></div><div class="a lbl mono" style="left:540.4px;top:836.05px;width:213.5px">App Server A3</div><div class="a dev" style="left:540.4px;top:853.12px;width:213.5px;height:28.14px"></div><div class="a hp" style="left:647.1px;top:855.32px;width:12.8px;height:6.8px"></div><div class="a hp" style="left:647.1px;top:873.46px;width:12.8px;height:6.8px"></div><div class="a mono" style="left:744.9px;top:874.26px;width:7px;height:5.5px;background:#374151;border-radius:1px;font-size:4.2px;line-height:5.7px;color:#8fa0b8;text-align:center">2U</div><div class="a" style="left:542.3px;top:876.36px;width:2.7px;height:2.9px;border-radius:50%;background:#10c98a"></div><div class="a lbl mono" style="left:540.4px;top:864.19px;width:213.5px">App Server A2</div><div class="a dev" style="left:540.4px;top:881.26px;width:213.5px;height:28.14px"></div><div class="a hp" style="left:647.1px;top:883.46px;width:12.8px;height:6.8px"></div><div class="a hp" style="left:647.1px;top:901.6px;width:12.8px;height:6.8px"></div><div class="a mono" style="left:744.9px;top:902.4px;width:7px;height:5.5px;background:#374151;border-radius:1px;font-size:4.2px;line-height:5.7px;color:#8fa0b8;text-align:center">2U</div><div class="a" style="left:542.3px;top:904.5px;width:2.7px;height:2.9px;border-radius:50%;background:#10c98a"></div><div class="a lbl mono" style="left:540.4px;top:892.33px;width:213.5px">App Server A1</div><div class="a pdu" style="left:779.3px;top:312.4px;width:15.6px;height:356.5px"></div><div class="a" style="left:780.3px;top:313.4px;width:13.6px;height:16px;background:linear-gradient(#4a5568,#3a4556);border-radius:2px 2px 0 0"></div><div class="a mono" style="left:779.3px;top:317px;width:15.6px;font-size:4.6px;line-height:6.1px;color:#f1f5f9;text-align:center;font-weight:bold">PDU<br>B1</div><div class="a out" style="left:783.6px;top:334.2px;width:7px;height:5px"></div><div class="a out" style="left:783.6px;top:345.7px;width:7px;height:5px"></div><div class="a out" style="left:783.6px;top:357.4px;width:7px;height:5px"></div><div class="a out" style="left:783.6px;top:368.7px;width:7px;height:5px"></div><div class="a out" style="left:783.6px;top:380.3px;width:7px;height:5px"></div><div class="a out" style="left:783.6px;top:391.4px;width:7px;height:5px"></div><div class="a out" style="left:783.6px;top:403.2px;width:7px;height:5px"></div><div class="a out" style="left:783.6px;top:414.3px;width:7px;height:5px"></div><div class="a outb" style="left:781.85px;top:422.85px;width:10.5px;height:7.5px"></div><div class="a outb" style="left:781.85px;top:433.45px;width:10.5px;height:7.5px"></div><div class="a out" style="left:783.6px;top:448.3px;width:7px;height:5px"></div><div class="a out" style="left:783.6px;top:459.7px;width:7px;height:5px"></div><div class="a out" style="left:783.6px;top:482.4px;width:7px;height:5px"></div><div class="a out" style="left:783.6px;top:493.9px;width:7px;height:5px"></div><div class="a out" style="left:783.6px;top:505.3px;width:7px;height:5px"></div><div class="a out" style="left:783.6px;top:516.5px;width:7px;height:5px"></div><div class="a out" style="left:783.6px;top:527.7px;width:7px;height:5px"></div><div class="a outb" style="left:781.85px;top:536.65px;width:10.5px;height:7.5px"></div><div class="a outb" style="left:781.85px;top:547.95px;width:10.5px;height:7.5px"></div><div class="a out" style="left:783.6px;top:562.3px;width:7px;height:5px"></div><div class="a out" style="left:783.6px;top:573.5px;width:7px;height:5px"></div><div class="a out" style="left:783.6px;top:584.9px;width:7px;height:5px"></div><div class="a out" style="left:783.6px;top:596.5px;width:7px;height:5px"></div><div class="a" style="left:781.6px;top:471.6px;width:12.3px;height:9.3px;background:#15171c;border-top:0.6px solid #3a4455;border-bottom:0.6px solid #3a4455"></div><div class="a" style="left:779.8px;top:473.1px;width:2.4px;height:6.6px;background:#f3f4f6;border-radius:0.5px"></div><div class="a" style="left:786.9px;top:473.7px;width:7.2px;height:5.5px;background:#10b981;border-radius:0.8px"></div><div class="a pdu" style="left:800.1px;top:312.4px;width:15.6px;height:356.5px"></div><div class="a" style="left:801.1px;top:313.4px;width:13.6px;height:16px;background:linear-gradient(#4a5568,#3a4556);border-radius:2px 2px 0 0"></div><div class="a mono" style="left:800.1px;top:317px;width:15.6px;font-size:4.6px;line-height:6.1px;color:#f1f5f9;text-align:center;font-weight:bold">PDU<br>B2</div><div class="a out" style="left:804.4px;top:334.2px;width:7px;height:5px"></div><div class="a out" style="left:804.4px;top:345.7px;width:7px;height:5px"></div><div class="a out" style="left:804.4px;top:357.4px;width:7px;height:5px"></div><div class="a out" style="left:804.4px;top:368.7px;width:7px;height:5px"></div><div class="a out" style="left:804.4px;top:380.3px;width:7px;height:5px"></div><div class="a out" style="left:804.4px;top:391.4px;width:7px;height:5px"></div><div class="a out" style="left:804.4px;top:403.2px;width:7px;height:5px"></div><div class="a out" style="left:804.4px;top:414.3px;width:7px;height:5px"></div><div class="a outb" style="left:802.65px;top:422.85px;width:10.5px;height:7.5px"></div><div class="a outb" style="left:802.65px;top:433.45px;width:10.5px;height:7.5px"></div><div class="a out" style="left:804.4px;top:448.3px;width:7px;height:5px"></div><div class="a out" style="left:804.4px;top:459.7px;width:7px;height:5px"></div><div class="a out" style="left:804.4px;top:482.4px;width:7px;height:5px"></div><div class="a out" style="left:804.4px;top:493.9px;width:7px;height:5px"></div><div class="a out" style="left:804.4px;top:505.3px;width:7px;height:5px"></div><div class="a out" style="left:804.4px;top:516.5px;width:7px;height:5px"></div><div class="a out" style="left:804.4px;top:527.7px;width:7px;height:5px"></div><div class="a outb" style="left:802.65px;top:536.65px;width:10.5px;height:7.5px"></div><div class="a outb" style="left:802.65px;top:547.95px;width:10.5px;height:7.5px"></div><div class="a out" style="left:804.4px;top:562.3px;width:7px;height:5px"></div><div class="a out" style="left:804.4px;top:573.5px;width:7px;height:5px"></div><div class="a out" style="left:804.4px;top:584.9px;width:7px;height:5px"></div><div class="a out" style="left:804.4px;top:596.5px;width:7px;height:5px"></div><div class="a" style="left:802.4px;top:471.6px;width:12.3px;height:9.3px;background:#15171c;border-top:0.6px solid #3a4455;border-bottom:0.6px solid #3a4455"></div><div class="a" style="left:800.6px;top:473.1px;width:2.4px;height:6.6px;background:#f3f4f6;border-radius:0.5px"></div><div class="a" style="left:807.7px;top:473.7px;width:7.2px;height:5.5px;background:#10b981;border-radius:0.8px"></div><div class="a rk" style="left:877.9px;top:277.9px;width:213.5px;height:634.9px"></div><div class="a rh" style="left:879.3px;top:279.3px;width:210.7px;height:41.9px;border-radius:4px 4px 0 0"></div><div class="a ucol" style="left:854.9px;top:318.46px;width:26.3px;height:594.34px"></div><div class="a mono" style="left:855.3px;top:319.22px;width:25.6px;height:14.07px;line-height:17.87px;padding-left:0.2px;color:#a0aec0;font-size:6.1px;text-align:center">42</div><div class="a" style="left:855.3px;top:332.03px;width:25.6px;height:1px;background:#465163"></div><div class="a mono" style="left:855.3px;top:333.27px;width:25.6px;height:14.07px;line-height:17.87px;padding-left:0.2px;color:#a0aec0;font-size:6.1px;text-align:center">41</div><div class="a" style="left:855.3px;top:346.1px;width:25.6px;height:1px;background:#465163"></div><div class="a mono" style="left:855.3px;top:347.32px;width:25.6px;height:14.07px;line-height:17.87px;padding-left:0.2px;color:#a0aec0;font-size:6.1px;text-align:center">40</div><div class="a" style="left:855.3px;top:360.17px;width:25.6px;height:1px;background:#465163"></div><div class="a mono" style="left:855.3px;top:361.37px;width:25.6px;height:14.07px;line-height:17.87px;padding-left:0.2px;color:#a0aec0;font-size:6.1px;text-align:center">39</div><div class="a" style="left:855.3px;top:374.24px;width:25.6px;height:1px;background:#465163"></div><div class="a mono" style="left:855.3px;top:375.42px;width:25.6px;height:14.07px;line-height:17.87px;padding-left:0.2px;color:#a0aec0;font-size:6.1px;text-align:center">38</div><div class="a" style="left:855.3px;top:388.31px;width:25.6px;height:1px;background:#465163"></div><div class="a mono" style="left:855.3px;top:389.47px;width:25.6px;height:14.07px;line-height:17.87px;padding-left:0.2px;color:#a0aec0;font-size:6.1px;text-align:center">37</div><div class="a" style="left:855.3px;top:402.38px;width:25.6px;height:1px;background:#465163"></div><div class="a mono" style="left:855.3px;top:403.51px;width:25.6px;height:14.07px;line-height:17.87px;padding-left:0.2px;color:#a0aec0;font-size:6.1px;text-align:center">36</div><div class="a" style="left:855.3px;top:416.45px;width:25.6px;height:1px;background:#465163"></div><div class="a mono" style="left:855.3px;top:417.56px;width:25.6px;height:14.07px;line-height:17.87px;padding-left:0.2px;color:#a0aec0;font-size:6.1px;text-align:center">35</div><div class="a" style="left:855.3px;top:430.52px;width:25.6px;height:1px;background:#465163"></div><div class="a mono" style="left:855.3px;top:431.61px;width:25.6px;height:14.07px;line-height:17.87px;padding-left:0.2px;color:#a0aec0;font-size:6.1px;text-align:center">34</div><div class="a" style="left:855.3px;top:444.59px;width:25.6px;height:1px;background:#465163"></div><div class="a mono" style="left:855.3px;top:445.66px;width:25.6px;height:14.07px;line-height:17.87px;padding-left:0.2px;color:#a0aec0;font-size:6.1px;text-align:center">33</div><div class="a" style="left:855.3px;top:458.66px;width:25.6px;height:1px;background:#465163"></div><div class="a mono" style="left:855.3px;top:459.71px;width:25.6px;height:14.07px;line-height:17.87px;padding-left:0.2px;color:#a0aec0;font-size:6.1px;text-align:center">32</div><div class="a" style="left:855.3px;top:472.73px;width:25.6px;height:1px;background:#465163"></div><div class="a mono" style="left:855.3px;top:473.76px;width:25.6px;height:14.07px;line-height:17.87px;padding-left:0.2px;color:#a0aec0;font-size:6.1px;text-align:center">31</div><div class="a" style="left:855.3px;top:486.8px;width:25.6px;height:1px;background:#465163"></div><div class="a mono" style="left:855.3px;top:487.81px;width:25.6px;height:14.07px;line-height:17.87px;padding-left:0.2px;color:#a0aec0;font-size:6.1px;text-align:center">30</div><div class="a" style="left:855.3px;top:500.87px;width:25.6px;height:1px;background:#465163"></div><div class="a mono" style="left:855.3px;top:501.86px;width:25.6px;height:14.07px;line-height:17.87px;padding-left:0.2px;color:#a0aec0;font-size:6.1px;text-align:center">29</div><div class="a" style="left:855.3px;top:514.94px;width:25.6px;height:1px;background:#465163"></div><div class="a mono" style="left:855.3px;top:515.91px;width:25.6px;height:14.07px;line-height:17.87px;padding-left:0.2px;color:#a0aec0;font-size:6.1px;text-align:center">28</div><div class="a" style="left:855.3px;top:529.01px;width:25.6px;height:1px;background:#465163"></div><div class="a mono" style="left:855.3px;top:529.96px;width:25.6px;height:14.07px;line-height:17.87px;padding-left:0.2px;color:#a0aec0;font-size:6.1px;text-align:center">27</div><div class="a" style="left:855.3px;top:543.08px;width:25.6px;height:1px;background:#465163"></div><div class="a mono" style="left:855.3px;top:544px;width:25.6px;height:14.07px;line-height:17.87px;padding-left:0.2px;color:#a0aec0;font-size:6.1px;text-align:center">26</div><div class="a" style="left:855.3px;top:557.15px;width:25.6px;height:1px;background:#465163"></div><div class="a mono" style="left:855.3px;top:558.05px;width:25.6px;height:14.07px;line-height:17.87px;padding-left:0.2px;color:#a0aec0;font-size:6.1px;text-align:center">25</div><div class="a" style="left:855.3px;top:571.22px;width:25.6px;height:1px;background:#465163"></div><div class="a mono" style="left:855.3px;top:572.1px;width:25.6px;height:14.07px;line-height:17.87px;padding-left:0.2px;color:#a0aec0;font-size:6.1px;text-align:center">24</div><div class="a" style="left:855.3px;top:585.29px;width:25.6px;height:1px;background:#465163"></div><div class="a mono" style="left:855.3px;top:586.15px;width:25.6px;height:14.07px;line-height:17.87px;padding-left:0.2px;color:#a0aec0;font-size:6.1px;text-align:center">23</div><div class="a" style="left:855.3px;top:599.36px;width:25.6px;height:1px;background:#465163"></div><div class="a mono" style="left:855.3px;top:600.2px;width:25.6px;height:14.07px;line-height:17.87px;padding-left:0.2px;color:#a0aec0;font-size:6.1px;text-align:center">22</div><div class="a" style="left:855.3px;top:613.43px;width:25.6px;height:1px;background:#465163"></div><div class="a mono" style="left:855.3px;top:614.25px;width:25.6px;height:14.07px;line-height:17.87px;padding-left:0.2px;color:#a0aec0;font-size:6.1px;text-align:center">21</div><div class="a" style="left:855.3px;top:627.5px;width:25.6px;height:1px;background:#465163"></div><div class="a mono" style="left:855.3px;top:628.3px;width:25.6px;height:14.07px;line-height:17.87px;padding-left:0.2px;color:#a0aec0;font-size:6.1px;text-align:center">20</div><div class="a" style="left:855.3px;top:641.57px;width:25.6px;height:1px;background:#465163"></div><div class="a mono" style="left:855.3px;top:642.35px;width:25.6px;height:14.07px;line-height:17.87px;padding-left:0.2px;color:#a0aec0;font-size:6.1px;text-align:center">19</div><div class="a" style="left:855.3px;top:655.64px;width:25.6px;height:1px;background:#465163"></div><div class="a mono" style="left:855.3px;top:656.4px;width:25.6px;height:14.07px;line-height:17.87px;padding-left:0.2px;color:#a0aec0;font-size:6.1px;text-align:center">18</div><div class="a" style="left:855.3px;top:669.71px;width:25.6px;height:1px;background:#465163"></div><div class="a mono" style="left:855.3px;top:670.45px;width:25.6px;height:14.07px;line-height:17.87px;padding-left:0.2px;color:#a0aec0;font-size:6.1px;text-align:center">17</div><div class="a" style="left:855.3px;top:683.78px;width:25.6px;height:1px;background:#465163"></div><div class="a mono" style="left:855.3px;top:684.5px;width:25.6px;height:14.07px;line-height:17.87px;padding-left:0.2px;color:#a0aec0;font-size:6.1px;text-align:center">16</div><div class="a" style="left:855.3px;top:697.85px;width:25.6px;height:1px;background:#465163"></div><div class="a mono" style="left:855.3px;top:698.54px;width:25.6px;height:14.07px;line-height:17.87px;padding-left:0.2px;color:#a0aec0;font-size:6.1px;text-align:center">15</div><div class="a" style="left:855.3px;top:711.92px;width:25.6px;height:1px;background:#465163"></div><div class="a mono" style="left:855.3px;top:712.59px;width:25.6px;height:14.07px;line-height:17.87px;padding-left:0.2px;color:#a0aec0;font-size:6.1px;text-align:center">14</div><div class="a" style="left:855.3px;top:725.99px;width:25.6px;height:1px;background:#465163"></div><div class="a mono" style="left:855.3px;top:726.64px;width:25.6px;height:14.07px;line-height:17.87px;padding-left:0.2px;color:#a0aec0;font-size:6.1px;text-align:center">13</div><div class="a" style="left:855.3px;top:740.06px;width:25.6px;height:1px;background:#465163"></div><div class="a mono" style="left:855.3px;top:740.69px;width:25.6px;height:14.07px;line-height:17.87px;padding-left:0.2px;color:#a0aec0;font-size:6.1px;text-align:center">12</div><div class="a" style="left:855.3px;top:754.13px;width:25.6px;height:1px;background:#465163"></div><div class="a mono" style="left:855.3px;top:754.74px;width:25.6px;height:14.07px;line-height:17.87px;padding-left:0.2px;color:#a0aec0;font-size:6.1px;text-align:center">11</div><div class="a" style="left:855.3px;top:768.2px;width:25.6px;height:1px;background:#465163"></div><div class="a mono" style="left:855.3px;top:768.79px;width:25.6px;height:14.07px;line-height:17.87px;padding-left:0.2px;color:#a0aec0;font-size:6.1px;text-align:center">10</div><div class="a" style="left:855.3px;top:782.27px;width:25.6px;height:1px;background:#465163"></div><div class="a mono" style="left:855.3px;top:782.84px;width:25.6px;height:14.07px;line-height:17.87px;padding-left:0.2px;color:#a0aec0;font-size:6.1px;text-align:center">9</div><div class="a" style="left:855.3px;top:796.34px;width:25.6px;height:1px;background:#465163"></div><div class="a mono" style="left:855.3px;top:796.89px;width:25.6px;height:14.07px;line-height:17.87px;padding-left:0.2px;color:#a0aec0;font-size:6.1px;text-align:center">8</div><div class="a" style="left:855.3px;top:810.41px;width:25.6px;height:1px;background:#465163"></div><div class="a mono" style="left:855.3px;top:810.94px;width:25.6px;height:14.07px;line-height:17.87px;padding-left:0.2px;color:#a0aec0;font-size:6.1px;text-align:center">7</div><div class="a" style="left:855.3px;top:824.48px;width:25.6px;height:1px;background:#465163"></div><div class="a mono" style="left:855.3px;top:824.99px;width:25.6px;height:14.07px;line-height:17.87px;padding-left:0.2px;color:#a0aec0;font-size:6.1px;text-align:center">6</div><div class="a" style="left:855.3px;top:838.55px;width:25.6px;height:1px;background:#465163"></div><div class="a mono" style="left:855.3px;top:839.03px;width:25.6px;height:14.07px;line-height:17.87px;padding-left:0.2px;color:#a0aec0;font-size:6.1px;text-align:center">5</div><div class="a" style="left:855.3px;top:852.62px;width:25.6px;height:1px;background:#465163"></div><div class="a mono" style="left:855.3px;top:853.08px;width:25.6px;height:14.07px;line-height:17.87px;padding-left:0.2px;color:#a0aec0;font-size:6.1px;text-align:center">4</div><div class="a" style="left:855.3px;top:866.69px;width:25.6px;height:1px;background:#465163"></div><div class="a mono" style="left:855.3px;top:867.13px;width:25.6px;height:14.07px;line-height:17.87px;padding-left:0.2px;color:#a0aec0;font-size:6.1px;text-align:center">3</div><div class="a" style="left:855.3px;top:880.76px;width:25.6px;height:1px;background:#465163"></div><div class="a mono" style="left:855.3px;top:881.18px;width:25.6px;height:14.07px;line-height:17.87px;padding-left:0.2px;color:#a0aec0;font-size:6.1px;text-align:center">2</div><div class="a" style="left:855.3px;top:894.83px;width:25.6px;height:1px;background:#465163"></div><div class="a mono" style="left:855.3px;top:895.23px;width:25.6px;height:14.07px;line-height:17.87px;padding-left:0.2px;color:#a0aec0;font-size:6.1px;text-align:center">1</div><div class="a mono" style="left:924.65px;top:288.4px;width:120px;text-align:center;font-size:8.4px;font-weight:bold;color:#f1f5f9">Rack B (42U)</div><div class="a mono" style="left:914.65px;top:304.2px;width:140px;text-align:center;font-size:7px;color:#94a3b8;white-space:nowrap"><span style="color:#fbbf24;font-weight:bold">B: 1.8/5KW</span> &#8226; 42U &#8226; front</div><div class="a" style="left:1022px;top:282px;width:12px;height:9.8px;background:#10b981;border-radius:1.5px;color:#e6fff5;font-size:6px;text-align:center;line-height:10px" class="mono">U</div><div class="a" style="left:1037.3px;top:282px;width:16.8px;height:9.8px;background:#374151;border-radius:1.5px;color:#9ca3af;font-size:5px;text-align:center;line-height:10px">&#8593;&#8595;</div><div class="a mono" style="left:1057px;top:282px;width:30.3px;height:9.8px;background:#374151;border-radius:1.5px;color:#9ca3af;font-size:5.5px;text-align:center;line-height:10px">&#8644; Rear</div><div class="a dev" style="left:877.9px;top:571.72px;width:213.5px;height:28.14px;background:#1e2736"></div><div class="a sp" style="left:879px;top:574.22px;width:11.2px;height:6.5px"></div><div class="a sp" style="left:879px;top:592.36px;width:11.2px;height:6.5px"></div><div class="a sp" style="left:891.63px;top:574.22px;width:11.2px;height:6.5px"></div><div class="a sp" style="left:891.63px;top:592.36px;width:11.2px;height:6.5px"></div><div class="a sp" style="left:904.26px;top:574.22px;width:11.2px;height:6.5px"></div><div class="a sp" style="left:904.26px;top:592.36px;width:11.2px;height:6.5px"></div><div class="a sp" style="left:916.89px;top:574.22px;width:11.2px;height:6.5px"></div><div class="a sp" style="left:916.89px;top:592.36px;width:11.2px;height:6.5px"></div><div class="a sp" style="left:929.52px;top:574.22px;width:11.2px;height:6.5px"></div><div class="a sp" style="left:929.52px;top:592.36px;width:11.2px;height:6.5px"></div><div class="a sp" style="left:942.15px;top:574.22px;width:11.2px;height:6.5px"></div><div class="a sp" style="left:942.15px;top:592.36px;width:11.2px;height:6.5px"></div><div class="a sp" style="left:954.78px;top:574.22px;width:11.2px;height:6.5px"></div><div class="a sp" style="left:954.78px;top:592.36px;width:11.2px;height:6.5px"></div><div class="a sp" style="left:967.41px;top:574.22px;width:11.2px;height:6.5px"></div><div class="a sp" style="left:967.41px;top:592.36px;width:11.2px;height:6.5px"></div><div class="a sp" style="left:980.04px;top:574.22px;width:11.2px;height:6.5px"></div><div class="a sp" style="left:980.04px;top:592.36px;width:11.2px;height:6.5px"></div><div class="a sp" style="left:992.67px;top:574.22px;width:11.2px;height:6.5px"></div><div class="a sp" style="left:992.67px;top:592.36px;width:11.2px;height:6.5px"></div><div class="a sp" style="left:1005.3px;top:574.22px;width:11.2px;height:6.5px"></div><div class="a sp" style="left:1005.3px;top:592.36px;width:11.2px;height:6.5px"></div><div class="a sp" style="left:1017.93px;top:574.22px;width:11.2px;height:6.5px"></div><div class="a sp" style="left:1017.93px;top:592.36px;width:11.2px;height:6.5px"></div><div class="a sp" style="left:1030.56px;top:574.22px;width:11.2px;height:6.5px"></div><div class="a sp" style="left:1030.56px;top:592.36px;width:11.2px;height:6.5px"></div><div class="a sp" style="left:1043.19px;top:574.22px;width:11.2px;height:6.5px"></div><div class="a sp" style="left:1043.19px;top:592.36px;width:11.2px;height:6.5px"></div><div class="a sp" style="left:1055.82px;top:574.22px;width:11.2px;height:6.5px"></div><div class="a sp" style="left:1055.82px;top:592.36px;width:11.2px;height:6.5px"></div><div class="a sp" style="left:1068.45px;top:574.22px;width:11.2px;height:6.5px"></div><div class="a sp" style="left:1068.45px;top:592.36px;width:11.2px;height:6.5px"></div><div class="a lbl mono" style="left:877.9px;top:582.79px;width:213.5px">100G Switch B (32x100G)</div><div class="a mono" style="left:1082.4px;top:592.36px;width:7px;height:5.5px;background:#374151;border-radius:1px;font-size:4.2px;line-height:5.7px;color:#8fa0b8;text-align:center">2U</div><div class="a dev" style="left:877.9px;top:613.93px;width:213.5px;height:14.07px"></div><div class="a" style="left:879.5px;top:615.73px;width:5px;height:3.7px;background:#626b7b"></div><div class="a" style="left:886.45px;top:615.73px;width:5px;height:3.7px;background:#626b7b"></div><div class="a" style="left:893.4px;top:615.73px;width:5px;height:3.7px;background:#626b7b"></div><div class="a" style="left:900.35px;top:615.73px;width:5px;height:3.7px;background:#626b7b"></div><div class="a" style="left:907.3px;top:615.73px;width:5px;height:3.7px;background:#626b7b"></div><div class="a" style="left:914.25px;top:615.73px;width:5px;height:3.7px;background:#626b7b"></div><div class="a" style="left:921.2px;top:615.73px;width:5px;height:3.7px;background:#626b7b"></div><div class="a" style="left:928.15px;top:615.73px;width:5px;height:3.7px;background:#626b7b"></div><div class="a" style="left:935.1px;top:615.73px;width:5px;height:3.7px;background:#626b7b"></div><div class="a" style="left:942.05px;top:615.73px;width:5px;height:3.7px;background:#626b7b"></div><div class="a" style="left:949px;top:615.73px;width:5px;height:3.7px;background:#626b7b"></div><div class="a" style="left:955.95px;top:615.73px;width:5px;height:3.7px;background:#626b7b"></div><div class="a" style="left:879.5px;top:623.73px;width:5px;height:3.7px;background:#626b7b"></div><div class="a" style="left:886.45px;top:623.73px;width:5px;height:3.7px;background:#626b7b"></div><div class="a" style="left:893.4px;top:623.73px;width:5px;height:3.7px;background:#626b7b"></div><div class="a" style="left:900.35px;top:623.73px;width:5px;height:3.7px;background:#626b7b"></div><div class="a" style="left:907.3px;top:623.73px;width:5px;height:3.7px;background:#626b7b"></div><div class="a" style="left:914.25px;top:623.73px;width:5px;height:3.7px;background:#626b7b"></div><div class="a" style="left:921.2px;top:623.73px;width:5px;height:3.7px;background:#626b7b"></div><div class="a" style="left:928.15px;top:623.73px;width:5px;height:3.7px;background:#626b7b"></div><div class="a" style="left:935.1px;top:623.73px;width:5px;height:3.7px;background:#626b7b"></div><div class="a" style="left:942.05px;top:623.73px;width:5px;height:3.7px;background:#626b7b"></div><div class="a" style="left:949px;top:623.73px;width:5px;height:3.7px;background:#626b7b"></div><div class="a" style="left:955.95px;top:623.73px;width:5px;height:3.7px;background:#626b7b"></div><div class="a lbl mono" style="left:877.9px;top:617.96px;width:213.5px">Patch Panel B1</div><div class="a dev" style="left:877.9px;top:642.07px;width:213.5px;height:28.14px"></div><div class="a hp" style="left:984.6px;top:644.27px;width:12.8px;height:6.8px"></div><div class="a hp" style="left:984.6px;top:662.41px;width:12.8px;height:6.8px"></div><div class="a mono" style="left:1082.4px;top:663.21px;width:7px;height:5.5px;background:#374151;border-radius:1px;font-size:4.2px;line-height:5.7px;color:#8fa0b8;text-align:center">2U</div><div class="a" style="left:879.8px;top:665.31px;width:2.7px;height:2.9px;border-radius:50%;background:#10c98a"></div><div class="a lbl mono" style="left:877.9px;top:653.14px;width:213.5px">Cache Server B10</div><div class="a dev" style="left:877.9px;top:670.21px;width:213.5px;height:28.14px"></div><div class="a hp" style="left:984.6px;top:672.41px;width:12.8px;height:6.8px"></div><div class="a hp" style="left:984.6px;top:690.55px;width:12.8px;height:6.8px"></div><div class="a mono" style="left:1082.4px;top:691.35px;width:7px;height:5.5px;background:#374151;border-radius:1px;font-size:4.2px;line-height:5.7px;color:#8fa0b8;text-align:center">2U</div><div class="a" style="left:879.8px;top:693.45px;width:2.7px;height:2.9px;border-radius:50%;background:#10c98a"></div><div class="a lbl mono" style="left:877.9px;top:681.28px;width:213.5px">DB Server B9</div><div class="a dev" style="left:877.9px;top:712.42px;width:213.5px;height:14.07px"></div><div class="a hp" style="left:984.6px;top:713.62px;width:7px;height:4.6px"></div><div class="a hp" style="left:984.6px;top:720.69px;width:7px;height:4.6px"></div><div class="a" style="left:879.8px;top:721.59px;width:2.7px;height:2.9px;border-radius:50%;background:#10c98a"></div><div class="a lbl mono" style="left:877.9px;top:716.45px;width:213.5px">Web Server B8</div><div class="a dev" style="left:877.9px;top:726.49px;width:213.5px;height:14.07px"></div><div class="a hp" style="left:984.6px;top:727.69px;width:7px;height:4.6px"></div><div class="a hp" style="left:984.6px;top:734.76px;width:7px;height:4.6px"></div><div class="a" style="left:879.8px;top:735.66px;width:2.7px;height:2.9px;border-radius:50%;background:#10c98a"></div><div class="a lbl mono" style="left:877.9px;top:730.52px;width:213.5px">Web Server B7</div><div class="a dev" style="left:877.9px;top:740.56px;width:213.5px;height:28.14px"></div><div class="a hp" style="left:984.6px;top:742.76px;width:12.8px;height:6.8px"></div><div class="a hp" style="left:984.6px;top:760.9px;width:12.8px;height:6.8px"></div><div class="a mono" style="left:1082.4px;top:761.7px;width:7px;height:5.5px;background:#374151;border-radius:1px;font-size:4.2px;line-height:5.7px;color:#8fa0b8;text-align:center">2U</div><div class="a" style="left:879.8px;top:763.8px;width:2.7px;height:2.9px;border-radius:50%;background:#10c98a"></div><div class="a lbl mono" style="left:877.9px;top:751.63px;width:213.5px">App Server B6</div><div class="a dev" style="left:877.9px;top:768.7px;width:213.5px;height:28.14px"></div><div class="a hp" style="left:984.6px;top:770.9px;width:12.8px;height:6.8px"></div><div class="a hp" style="left:984.6px;top:789.04px;width:12.8px;height:6.8px"></div><div class="a mono" style="left:1082.4px;top:789.84px;width:7px;height:5.5px;background:#374151;border-radius:1px;font-size:4.2px;line-height:5.7px;color:#8fa0b8;text-align:center">2U</div><div class="a" style="left:879.8px;top:791.94px;width:2.7px;height:2.9px;border-radius:50%;background:#10c98a"></div><div class="a lbl mono" style="left:877.9px;top:779.77px;width:213.5px">App Server B5</div><div class="a dev" style="left:877.9px;top:796.84px;width:213.5px;height:28.14px"></div><div class="a hp" style="left:984.6px;top:799.04px;width:12.8px;height:6.8px"></div><div class="a hp" style="left:984.6px;top:817.18px;width:12.8px;height:6.8px"></div><div class="a mono" style="left:1082.4px;top:817.98px;width:7px;height:5.5px;background:#374151;border-radius:1px;font-size:4.2px;line-height:5.7px;color:#8fa0b8;text-align:center">2U</div><div class="a" style="left:879.8px;top:820.08px;width:2.7px;height:2.9px;border-radius:50%;background:#10c98a"></div><div class="a lbl mono" style="left:877.9px;top:807.91px;width:213.5px">App Server B4</div><div class="a dev" style="left:877.9px;top:824.98px;width:213.5px;height:28.14px"></div><div class="a hp" style="left:984.6px;top:827.18px;width:12.8px;height:6.8px"></div><div class="a hp" style="left:984.6px;top:845.32px;width:12.8px;height:6.8px"></div><div class="a mono" style="left:1082.4px;top:846.12px;width:7px;height:5.5px;background:#374151;border-radius:1px;font-size:4.2px;line-height:5.7px;color:#8fa0b8;text-align:center">2U</div><div class="a" style="left:879.8px;top:848.22px;width:2.7px;height:2.9px;border-radius:50%;background:#10c98a"></div><div class="a lbl mono" style="left:877.9px;top:836.05px;width:213.5px">App Server B3</div><div class="a dev" style="left:877.9px;top:853.12px;width:213.5px;height:28.14px"></div><div class="a hp" style="left:984.6px;top:855.32px;width:12.8px;height:6.8px"></div><div class="a hp" style="left:984.6px;top:873.46px;width:12.8px;height:6.8px"></div><div class="a mono" style="left:1082.4px;top:874.26px;width:7px;height:5.5px;background:#374151;border-radius:1px;font-size:4.2px;line-height:5.7px;color:#8fa0b8;text-align:center">2U</div><div class="a" style="left:879.8px;top:876.36px;width:2.7px;height:2.9px;border-radius:50%;background:#10c98a"></div><div class="a lbl mono" style="left:877.9px;top:864.19px;width:213.5px">App Server B2</div><div class="a dev" style="left:877.9px;top:881.26px;width:213.5px;height:28.14px"></div><div class="a hp" style="left:984.6px;top:883.46px;width:12.8px;height:6.8px"></div><div class="a hp" style="left:984.6px;top:901.6px;width:12.8px;height:6.8px"></div><div class="a mono" style="left:1082.4px;top:902.4px;width:7px;height:5.5px;background:#374151;border-radius:1px;font-size:4.2px;line-height:5.7px;color:#8fa0b8;text-align:center">2U</div><div class="a" style="left:879.8px;top:904.5px;width:2.7px;height:2.9px;border-radius:50%;background:#10c98a"></div><div class="a lbl mono" style="left:877.9px;top:892.33px;width:213.5px">App Server B1</div><div class="a pdu" style="left:1145.1px;top:256px;width:15.6px;height:356.5px"></div><div class="a" style="left:1146.1px;top:257px;width:13.6px;height:16px;background:linear-gradient(#4a5568,#3a4556);border-radius:2px 2px 0 0"></div><div class="a mono" style="left:1145.1px;top:260.6px;width:15.6px;font-size:4.6px;line-height:6.1px;color:#f1f5f9;text-align:center;font-weight:bold">PDU<br>C1</div><div class="a out" style="left:1149.4px;top:277.8px;width:7px;height:5px"></div><div class="a out" style="left:1149.4px;top:289.3px;width:7px;height:5px"></div><div class="a out" style="left:1149.4px;top:301px;width:7px;height:5px"></div><div class="a out" style="left:1149.4px;top:312.3px;width:7px;height:5px"></div><div class="a out" style="left:1149.4px;top:323.9px;width:7px;height:5px"></div><div class="a out" style="left:1149.4px;top:335px;width:7px;height:5px"></div><div class="a out" style="left:1149.4px;top:346.8px;width:7px;height:5px"></div><div class="a out" style="left:1149.4px;top:357.9px;width:7px;height:5px"></div><div class="a outb" style="left:1147.65px;top:366.45px;width:10.5px;height:7.5px"></div><div class="a outb" style="left:1147.65px;top:377.05px;width:10.5px;height:7.5px"></div><div class="a out" style="left:1149.4px;top:391.9px;width:7px;height:5px"></div><div class="a out" style="left:1149.4px;top:403.3px;width:7px;height:5px"></div><div class="a out" style="left:1149.4px;top:426px;width:7px;height:5px"></div><div class="a out" style="left:1149.4px;top:437.5px;width:7px;height:5px"></div><div class="a out" style="left:1149.4px;top:448.9px;width:7px;height:5px"></div><div class="a out" style="left:1149.4px;top:460.1px;width:7px;height:5px"></div><div class="a out" style="left:1149.4px;top:471.3px;width:7px;height:5px"></div><div class="a outb" style="left:1147.65px;top:480.25px;width:10.5px;height:7.5px"></div><div class="a outb" style="left:1147.65px;top:491.55px;width:10.5px;height:7.5px"></div><div class="a out" style="left:1149.4px;top:505.9px;width:7px;height:5px"></div><div class="a out" style="left:1149.4px;top:517.1px;width:7px;height:5px"></div><div class="a out" style="left:1149.4px;top:528.5px;width:7px;height:5px"></div><div class="a out" style="left:1149.4px;top:540.1px;width:7px;height:5px"></div><div class="a" style="left:1147.4px;top:415.2px;width:12.3px;height:9.3px;background:#15171c;border-top:0.6px solid #3a4455;border-bottom:0.6px solid #3a4455"></div><div class="a" style="left:1145.6px;top:416.7px;width:2.4px;height:6.6px;background:#f3f4f6;border-radius:0.5px"></div><div class="a" style="left:1152.7px;top:417.3px;width:7.2px;height:5.5px;background:#10b981;border-radius:0.8px"></div><div class="a pdu" style="left:1166px;top:256px;width:15.6px;height:356.5px"></div><div class="a" style="left:1167px;top:257px;width:13.6px;height:16px;background:linear-gradient(#4a5568,#3a4556);border-radius:2px 2px 0 0"></div><div class="a mono" style="left:1166px;top:260.6px;width:15.6px;font-size:4.6px;line-height:6.1px;color:#f1f5f9;text-align:center;font-weight:bold">PDU<br>C2</div><div class="a out" style="left:1170.3px;top:277.8px;width:7px;height:5px"></div><div class="a out" style="left:1170.3px;top:289.3px;width:7px;height:5px"></div><div class="a out" style="left:1170.3px;top:301px;width:7px;height:5px"></div><div class="a out" style="left:1170.3px;top:312.3px;width:7px;height:5px"></div><div class="a out" style="left:1170.3px;top:323.9px;width:7px;height:5px"></div><div class="a out" style="left:1170.3px;top:335px;width:7px;height:5px"></div><div class="a out" style="left:1170.3px;top:346.8px;width:7px;height:5px"></div><div class="a out" style="left:1170.3px;top:357.9px;width:7px;height:5px"></div><div class="a outb" style="left:1168.55px;top:366.45px;width:10.5px;height:7.5px"></div><div class="a outb" style="left:1168.55px;top:377.05px;width:10.5px;height:7.5px"></div><div class="a out" style="left:1170.3px;top:391.9px;width:7px;height:5px"></div><div class="a out" style="left:1170.3px;top:403.3px;width:7px;height:5px"></div><div class="a out" style="left:1170.3px;top:426px;width:7px;height:5px"></div><div class="a out" style="left:1170.3px;top:437.5px;width:7px;height:5px"></div><div class="a out" style="left:1170.3px;top:448.9px;width:7px;height:5px"></div><div class="a out" style="left:1170.3px;top:460.1px;width:7px;height:5px"></div><div class="a out" style="left:1170.3px;top:471.3px;width:7px;height:5px"></div><div class="a outb" style="left:1168.55px;top:480.25px;width:10.5px;height:7.5px"></div><div class="a outb" style="left:1168.55px;top:491.55px;width:10.5px;height:7.5px"></div><div class="a out" style="left:1170.3px;top:505.9px;width:7px;height:5px"></div><div class="a out" style="left:1170.3px;top:517.1px;width:7px;height:5px"></div><div class="a out" style="left:1170.3px;top:528.5px;width:7px;height:5px"></div><div class="a out" style="left:1170.3px;top:540.1px;width:7px;height:5px"></div><div class="a" style="left:1168.3px;top:415.2px;width:12.3px;height:9.3px;background:#15171c;border-top:0.6px solid #3a4455;border-bottom:0.6px solid #3a4455"></div><div class="a" style="left:1166.5px;top:416.7px;width:2.4px;height:6.6px;background:#f3f4f6;border-radius:0.5px"></div><div class="a" style="left:1173.6px;top:417.3px;width:7.2px;height:5.5px;background:#10b981;border-radius:0.8px"></div><div class="a rk" style="left:1229.9px;top:193.8px;width:213.5px;height:719px"></div><div class="a rh" style="left:1231.3px;top:195.2px;width:210.7px;height:41.4px;border-radius:4px 4px 0 0"></div><div class="a ucol" style="left:1206.9px;top:234.04px;width:26.3px;height:678.76px"></div><div class="a mono" style="left:1207.3px;top:234.93px;width:25.6px;height:14.07px;line-height:17.87px;padding-left:0.2px;color:#a0aec0;font-size:6.1px;text-align:center">48</div><div class="a" style="left:1207.3px;top:247.61px;width:25.6px;height:1px;background:#465163"></div><div class="a mono" style="left:1207.3px;top:248.98px;width:25.6px;height:14.07px;line-height:17.87px;padding-left:0.2px;color:#a0aec0;font-size:6.1px;text-align:center">47</div><div class="a" style="left:1207.3px;top:261.68px;width:25.6px;height:1px;background:#465163"></div><div class="a mono" style="left:1207.3px;top:263.03px;width:25.6px;height:14.07px;line-height:17.87px;padding-left:0.2px;color:#a0aec0;font-size:6.1px;text-align:center">46</div><div class="a" style="left:1207.3px;top:275.75px;width:25.6px;height:1px;background:#465163"></div><div class="a mono" style="left:1207.3px;top:277.07px;width:25.6px;height:14.07px;line-height:17.87px;padding-left:0.2px;color:#a0aec0;font-size:6.1px;text-align:center">45</div><div class="a" style="left:1207.3px;top:289.82px;width:25.6px;height:1px;background:#465163"></div><div class="a mono" style="left:1207.3px;top:291.12px;width:25.6px;height:14.07px;line-height:17.87px;padding-left:0.2px;color:#a0aec0;font-size:6.1px;text-align:center">44</div><div class="a" style="left:1207.3px;top:303.89px;width:25.6px;height:1px;background:#465163"></div><div class="a mono" style="left:1207.3px;top:305.17px;width:25.6px;height:14.07px;line-height:17.87px;padding-left:0.2px;color:#a0aec0;font-size:6.1px;text-align:center">43</div><div class="a" style="left:1207.3px;top:317.96px;width:25.6px;height:1px;background:#465163"></div><div class="a mono" style="left:1207.3px;top:319.22px;width:25.6px;height:14.07px;line-height:17.87px;padding-left:0.2px;color:#a0aec0;font-size:6.1px;text-align:center">42</div><div class="a" style="left:1207.3px;top:332.03px;width:25.6px;height:1px;background:#465163"></div><div class="a mono" style="left:1207.3px;top:333.27px;width:25.6px;height:14.07px;line-height:17.87px;padding-left:0.2px;color:#a0aec0;font-size:6.1px;text-align:center">41</div><div class="a" style="left:1207.3px;top:346.1px;width:25.6px;height:1px;background:#465163"></div><div class="a mono" style="left:1207.3px;top:347.32px;width:25.6px;height:14.07px;line-height:17.87px;padding-left:0.2px;color:#a0aec0;font-size:6.1px;text-align:center">40</div><div class="a" style="left:1207.3px;top:360.17px;width:25.6px;height:1px;background:#465163"></div><div class="a mono" style="left:1207.3px;top:361.37px;width:25.6px;height:14.07px;line-height:17.87px;padding-left:0.2px;color:#a0aec0;font-size:6.1px;text-align:center">39</div><div class="a" style="left:1207.3px;top:374.24px;width:25.6px;height:1px;background:#465163"></div><div class="a mono" style="left:1207.3px;top:375.42px;width:25.6px;height:14.07px;line-height:17.87px;padding-left:0.2px;color:#a0aec0;font-size:6.1px;text-align:center">38</div><div class="a" style="left:1207.3px;top:388.31px;width:25.6px;height:1px;background:#465163"></div><div class="a mono" style="left:1207.3px;top:389.47px;width:25.6px;height:14.07px;line-height:17.87px;padding-left:0.2px;color:#a0aec0;font-size:6.1px;text-align:center">37</div><div class="a" style="left:1207.3px;top:402.38px;width:25.6px;height:1px;background:#465163"></div><div class="a mono" style="left:1207.3px;top:403.51px;width:25.6px;height:14.07px;line-height:17.87px;padding-left:0.2px;color:#a0aec0;font-size:6.1px;text-align:center">36</div><div class="a" style="left:1207.3px;top:416.45px;width:25.6px;height:1px;background:#465163"></div><div class="a mono" style="left:1207.3px;top:417.56px;width:25.6px;height:14.07px;line-height:17.87px;padding-left:0.2px;color:#a0aec0;font-size:6.1px;text-align:center">35</div><div class="a" style="left:1207.3px;top:430.52px;width:25.6px;height:1px;background:#465163"></div><div class="a mono" style="left:1207.3px;top:431.61px;width:25.6px;height:14.07px;line-height:17.87px;padding-left:0.2px;color:#a0aec0;font-size:6.1px;text-align:center">34</div><div class="a" style="left:1207.3px;top:444.59px;width:25.6px;height:1px;background:#465163"></div><div class="a mono" style="left:1207.3px;top:445.66px;width:25.6px;height:14.07px;line-height:17.87px;padding-left:0.2px;color:#a0aec0;font-size:6.1px;text-align:center">33</div><div class="a" style="left:1207.3px;top:458.66px;width:25.6px;height:1px;background:#465163"></div><div class="a mono" style="left:1207.3px;top:459.71px;width:25.6px;height:14.07px;line-height:17.87px;padding-left:0.2px;color:#a0aec0;font-size:6.1px;text-align:center">32</div><div class="a" style="left:1207.3px;top:472.73px;width:25.6px;height:1px;background:#465163"></div><div class="a mono" style="left:1207.3px;top:473.76px;width:25.6px;height:14.07px;line-height:17.87px;padding-left:0.2px;color:#a0aec0;font-size:6.1px;text-align:center">31</div><div class="a" style="left:1207.3px;top:486.8px;width:25.6px;height:1px;background:#465163"></div><div class="a mono" style="left:1207.3px;top:487.81px;width:25.6px;height:14.07px;line-height:17.87px;padding-left:0.2px;color:#a0aec0;font-size:6.1px;text-align:center">30</div><div class="a" style="left:1207.3px;top:500.87px;width:25.6px;height:1px;background:#465163"></div><div class="a mono" style="left:1207.3px;top:501.86px;width:25.6px;height:14.07px;line-height:17.87px;padding-left:0.2px;color:#a0aec0;font-size:6.1px;text-align:center">29</div><div class="a" style="left:1207.3px;top:514.94px;width:25.6px;height:1px;background:#465163"></div><div class="a mono" style="left:1207.3px;top:515.91px;width:25.6px;height:14.07px;line-height:17.87px;padding-left:0.2px;color:#a0aec0;font-size:6.1px;text-align:center">28</div><div class="a" style="left:1207.3px;top:529.01px;width:25.6px;height:1px;background:#465163"></div><div class="a mono" style="left:1207.3px;top:529.96px;width:25.6px;height:14.07px;line-height:17.87px;padding-left:0.2px;color:#a0aec0;font-size:6.1px;text-align:center">27</div><div class="a" style="left:1207.3px;top:543.08px;width:25.6px;height:1px;background:#465163"></div><div class="a mono" style="left:1207.3px;top:544px;width:25.6px;height:14.07px;line-height:17.87px;padding-left:0.2px;color:#a0aec0;font-size:6.1px;text-align:center">26</div><div class="a" style="left:1207.3px;top:557.15px;width:25.6px;height:1px;background:#465163"></div><div class="a mono" style="left:1207.3px;top:558.05px;width:25.6px;height:14.07px;line-height:17.87px;padding-left:0.2px;color:#a0aec0;font-size:6.1px;text-align:center">25</div><div class="a" style="left:1207.3px;top:571.22px;width:25.6px;height:1px;background:#465163"></div><div class="a mono" style="left:1207.3px;top:572.1px;width:25.6px;height:14.07px;line-height:17.87px;padding-left:0.2px;color:#a0aec0;font-size:6.1px;text-align:center">24</div><div class="a" style="left:1207.3px;top:585.29px;width:25.6px;height:1px;background:#465163"></div><div class="a mono" style="left:1207.3px;top:586.15px;width:25.6px;height:14.07px;line-height:17.87px;padding-left:0.2px;color:#a0aec0;font-size:6.1px;text-align:center">23</div><div class="a" style="left:1207.3px;top:599.36px;width:25.6px;height:1px;background:#465163"></div><div class="a mono" style="left:1207.3px;top:600.2px;width:25.6px;height:14.07px;line-height:17.87px;padding-left:0.2px;color:#a0aec0;font-size:6.1px;text-align:center">22</div><div class="a" style="left:1207.3px;top:613.43px;width:25.6px;height:1px;background:#465163"></div><div class="a mono" style="left:1207.3px;top:614.25px;width:25.6px;height:14.07px;line-height:17.87px;padding-left:0.2px;color:#a0aec0;font-size:6.1px;text-align:center">21</div><div class="a" style="left:1207.3px;top:627.5px;width:25.6px;height:1px;background:#465163"></div><div class="a mono" style="left:1207.3px;top:628.3px;width:25.6px;height:14.07px;line-height:17.87px;padding-left:0.2px;color:#a0aec0;font-size:6.1px;text-align:center">20</div><div class="a" style="left:1207.3px;top:641.57px;width:25.6px;height:1px;background:#465163"></div><div class="a mono" style="left:1207.3px;top:642.35px;width:25.6px;height:14.07px;line-height:17.87px;padding-left:0.2px;color:#a0aec0;font-size:6.1px;text-align:center">19</div><div class="a" style="left:1207.3px;top:655.64px;width:25.6px;height:1px;background:#465163"></div><div class="a mono" style="left:1207.3px;top:656.4px;width:25.6px;height:14.07px;line-height:17.87px;padding-left:0.2px;color:#a0aec0;font-size:6.1px;text-align:center">18</div><div class="a" style="left:1207.3px;top:669.71px;width:25.6px;height:1px;background:#465163"></div><div class="a mono" style="left:1207.3px;top:670.45px;width:25.6px;height:14.07px;line-height:17.87px;padding-left:0.2px;color:#a0aec0;font-size:6.1px;text-align:center">17</div><div class="a" style="left:1207.3px;top:683.78px;width:25.6px;height:1px;background:#465163"></div><div class="a mono" style="left:1207.3px;top:684.5px;width:25.6px;height:14.07px;line-height:17.87px;padding-left:0.2px;color:#a0aec0;font-size:6.1px;text-align:center">16</div><div class="a" style="left:1207.3px;top:697.85px;width:25.6px;height:1px;background:#465163"></div><div class="a mono" style="left:1207.3px;top:698.54px;width:25.6px;height:14.07px;line-height:17.87px;padding-left:0.2px;color:#a0aec0;font-size:6.1px;text-align:center">15</div><div class="a" style="left:1207.3px;top:711.92px;width:25.6px;height:1px;background:#465163"></div><div class="a mono" style="left:1207.3px;top:712.59px;width:25.6px;height:14.07px;line-height:17.87px;padding-left:0.2px;color:#a0aec0;font-size:6.1px;text-align:center">14</div><div class="a" style="left:1207.3px;top:725.99px;width:25.6px;height:1px;background:#465163"></div><div class="a mono" style="left:1207.3px;top:726.64px;width:25.6px;height:14.07px;line-height:17.87px;padding-left:0.2px;color:#a0aec0;font-size:6.1px;text-align:center">13</div><div class="a" style="left:1207.3px;top:740.06px;width:25.6px;height:1px;background:#465163"></div><div class="a mono" style="left:1207.3px;top:740.69px;width:25.6px;height:14.07px;line-height:17.87px;padding-left:0.2px;color:#a0aec0;font-size:6.1px;text-align:center">12</div><div class="a" style="left:1207.3px;top:754.13px;width:25.6px;height:1px;background:#465163"></div><div class="a mono" style="left:1207.3px;top:754.74px;width:25.6px;height:14.07px;line-height:17.87px;padding-left:0.2px;color:#a0aec0;font-size:6.1px;text-align:center">11</div><div class="a" style="left:1207.3px;top:768.2px;width:25.6px;height:1px;background:#465163"></div><div class="a mono" style="left:1207.3px;top:768.79px;width:25.6px;height:14.07px;line-height:17.87px;padding-left:0.2px;color:#a0aec0;font-size:6.1px;text-align:center">10</div><div class="a" style="left:1207.3px;top:782.27px;width:25.6px;height:1px;background:#465163"></div><div class="a mono" style="left:1207.3px;top:782.84px;width:25.6px;height:14.07px;line-height:17.87px;padding-left:0.2px;color:#a0aec0;font-size:6.1px;text-align:center">9</div><div class="a" style="left:1207.3px;top:796.34px;width:25.6px;height:1px;background:#465163"></div><div class="a mono" style="left:1207.3px;top:796.89px;width:25.6px;height:14.07px;line-height:17.87px;padding-left:0.2px;color:#a0aec0;font-size:6.1px;text-align:center">8</div><div class="a" style="left:1207.3px;top:810.41px;width:25.6px;height:1px;background:#465163"></div><div class="a mono" style="left:1207.3px;top:810.94px;width:25.6px;height:14.07px;line-height:17.87px;padding-left:0.2px;color:#a0aec0;font-size:6.1px;text-align:center">7</div><div class="a" style="left:1207.3px;top:824.48px;width:25.6px;height:1px;background:#465163"></div><div class="a mono" style="left:1207.3px;top:824.99px;width:25.6px;height:14.07px;line-height:17.87px;padding-left:0.2px;color:#a0aec0;font-size:6.1px;text-align:center">6</div><div class="a" style="left:1207.3px;top:838.55px;width:25.6px;height:1px;background:#465163"></div><div class="a mono" style="left:1207.3px;top:839.03px;width:25.6px;height:14.07px;line-height:17.87px;padding-left:0.2px;color:#a0aec0;font-size:6.1px;text-align:center">5</div><div class="a" style="left:1207.3px;top:852.62px;width:25.6px;height:1px;background:#465163"></div><div class="a mono" style="left:1207.3px;top:853.08px;width:25.6px;height:14.07px;line-height:17.87px;padding-left:0.2px;color:#a0aec0;font-size:6.1px;text-align:center">4</div><div class="a" style="left:1207.3px;top:866.69px;width:25.6px;height:1px;background:#465163"></div><div class="a mono" style="left:1207.3px;top:867.13px;width:25.6px;height:14.07px;line-height:17.87px;padding-left:0.2px;color:#a0aec0;font-size:6.1px;text-align:center">3</div><div class="a" style="left:1207.3px;top:880.76px;width:25.6px;height:1px;background:#465163"></div><div class="a mono" style="left:1207.3px;top:881.18px;width:25.6px;height:14.07px;line-height:17.87px;padding-left:0.2px;color:#a0aec0;font-size:6.1px;text-align:center">2</div><div class="a" style="left:1207.3px;top:894.83px;width:25.6px;height:1px;background:#465163"></div><div class="a mono" style="left:1207.3px;top:895.23px;width:25.6px;height:14.07px;line-height:17.87px;padding-left:0.2px;color:#a0aec0;font-size:6.1px;text-align:center">1</div><div class="a mono" style="left:1276.65px;top:204.3px;width:120px;text-align:center;font-size:8.4px;font-weight:bold;color:#f1f5f9">Rack C (48U)</div><div class="a mono" style="left:1266.65px;top:220.1px;width:140px;text-align:center;font-size:7px;color:#94a3b8;white-space:nowrap"><span style="color:#fbbf24;font-weight:bold">C: 2.1/6KW</span> &#8226; 48U &#8226; front</div><div class="a" style="left:1374px;top:197.9px;width:12px;height:9.8px;background:#10b981;border-radius:1.5px;color:#e6fff5;font-size:6px;text-align:center;line-height:10px" class="mono">U</div><div class="a" style="left:1389.3px;top:197.9px;width:16.8px;height:9.8px;background:#374151;border-radius:1.5px;color:#9ca3af;font-size:5px;text-align:center;line-height:10px">&#8593;&#8595;</div><div class="a mono" style="left:1409px;top:197.9px;width:30.3px;height:9.8px;background:#374151;border-radius:1.5px;color:#9ca3af;font-size:5.5px;text-align:center;line-height:10px">&#8644; Rear</div><div class="a dev" style="left:1229.9px;top:628px;width:213.5px;height:28.14px;background:#1e2736"></div><div class="a sp" style="left:1231px;top:630.5px;width:11.2px;height:6.5px"></div><div class="a sp" style="left:1231px;top:648.64px;width:11.2px;height:6.5px"></div><div class="a sp" style="left:1243.63px;top:630.5px;width:11.2px;height:6.5px"></div><div class="a sp" style="left:1243.63px;top:648.64px;width:11.2px;height:6.5px"></div><div class="a sp" style="left:1256.26px;top:630.5px;width:11.2px;height:6.5px"></div><div class="a sp" style="left:1256.26px;top:648.64px;width:11.2px;height:6.5px"></div><div class="a sp" style="left:1268.89px;top:630.5px;width:11.2px;height:6.5px"></div><div class="a sp" style="left:1268.89px;top:648.64px;width:11.2px;height:6.5px"></div><div class="a sp" style="left:1281.52px;top:630.5px;width:11.2px;height:6.5px"></div><div class="a sp" style="left:1281.52px;top:648.64px;width:11.2px;height:6.5px"></div><div class="a sp" style="left:1294.15px;top:630.5px;width:11.2px;height:6.5px"></div><div class="a sp" style="left:1294.15px;top:648.64px;width:11.2px;height:6.5px"></div><div class="a sp" style="left:1306.78px;top:630.5px;width:11.2px;height:6.5px"></div><div class="a sp" style="left:1306.78px;top:648.64px;width:11.2px;height:6.5px"></div><div class="a sp" style="left:1319.41px;top:630.5px;width:11.2px;height:6.5px"></div><div class="a sp" style="left:1319.41px;top:648.64px;width:11.2px;height:6.5px"></div><div class="a sp" style="left:1332.04px;top:630.5px;width:11.2px;height:6.5px"></div><div class="a sp" style="left:1332.04px;top:648.64px;width:11.2px;height:6.5px"></div><div class="a sp" style="left:1344.67px;top:630.5px;width:11.2px;height:6.5px"></div><div class="a sp" style="left:1344.67px;top:648.64px;width:11.2px;height:6.5px"></div><div class="a sp" style="left:1357.3px;top:630.5px;width:11.2px;height:6.5px"></div><div class="a sp" style="left:1357.3px;top:648.64px;width:11.2px;height:6.5px"></div><div class="a sp" style="left:1369.93px;top:630.5px;width:11.2px;height:6.5px"></div><div class="a sp" style="left:1369.93px;top:648.64px;width:11.2px;height:6.5px"></div><div class="a sp" style="left:1382.56px;top:630.5px;width:11.2px;height:6.5px"></div><div class="a sp" style="left:1382.56px;top:648.64px;width:11.2px;height:6.5px"></div><div class="a sp" style="left:1395.19px;top:630.5px;width:11.2px;height:6.5px"></div><div class="a sp" style="left:1395.19px;top:648.64px;width:11.2px;height:6.5px"></div><div class="a sp" style="left:1407.82px;top:630.5px;width:11.2px;height:6.5px"></div><div class="a sp" style="left:1407.82px;top:648.64px;width:11.2px;height:6.5px"></div><div class="a sp" style="left:1420.45px;top:630.5px;width:11.2px;height:6.5px"></div><div class="a sp" style="left:1420.45px;top:648.64px;width:11.2px;height:6.5px"></div><div class="a lbl mono" style="left:1229.9px;top:639.07px;width:213.5px">100G Switch C (32x100G)</div><div class="a mono" style="left:1434.4px;top:648.64px;width:7px;height:5.5px;background:#374151;border-radius:1px;font-size:4.2px;line-height:5.7px;color:#8fa0b8;text-align:center">2U</div><div class="a dev" style="left:1229.9px;top:670.21px;width:213.5px;height:14.07px"></div><div class="a" style="left:1231.5px;top:672.01px;width:5px;height:3.7px;background:#626b7b"></div><div class="a" style="left:1238.45px;top:672.01px;width:5px;height:3.7px;background:#626b7b"></div><div class="a" style="left:1245.4px;top:672.01px;width:5px;height:3.7px;background:#626b7b"></div><div class="a" style="left:1252.35px;top:672.01px;width:5px;height:3.7px;background:#626b7b"></div><div class="a" style="left:1259.3px;top:672.01px;width:5px;height:3.7px;background:#626b7b"></div><div class="a" style="left:1266.25px;top:672.01px;width:5px;height:3.7px;background:#626b7b"></div><div class="a" style="left:1273.2px;top:672.01px;width:5px;height:3.7px;background:#626b7b"></div><div class="a" style="left:1280.15px;top:672.01px;width:5px;height:3.7px;background:#626b7b"></div><div class="a" style="left:1287.1px;top:672.01px;width:5px;height:3.7px;background:#626b7b"></div><div class="a" style="left:1294.05px;top:672.01px;width:5px;height:3.7px;background:#626b7b"></div><div class="a" style="left:1301px;top:672.01px;width:5px;height:3.7px;background:#626b7b"></div><div class="a" style="left:1307.95px;top:672.01px;width:5px;height:3.7px;background:#626b7b"></div><div class="a" style="left:1231.5px;top:680.01px;width:5px;height:3.7px;background:#626b7b"></div><div class="a" style="left:1238.45px;top:680.01px;width:5px;height:3.7px;background:#626b7b"></div><div class="a" style="left:1245.4px;top:680.01px;width:5px;height:3.7px;background:#626b7b"></div><div class="a" style="left:1252.35px;top:680.01px;width:5px;height:3.7px;background:#626b7b"></div><div class="a" style="left:1259.3px;top:680.01px;width:5px;height:3.7px;background:#626b7b"></div><div class="a" style="left:1266.25px;top:680.01px;width:5px;height:3.7px;background:#626b7b"></div><div class="a" style="left:1273.2px;top:680.01px;width:5px;height:3.7px;background:#626b7b"></div><div class="a" style="left:1280.15px;top:680.01px;width:5px;height:3.7px;background:#626b7b"></div><div class="a" style="left:1287.1px;top:680.01px;width:5px;height:3.7px;background:#626b7b"></div><div class="a" style="left:1294.05px;top:680.01px;width:5px;height:3.7px;background:#626b7b"></div><div class="a" style="left:1301px;top:680.01px;width:5px;height:3.7px;background:#626b7b"></div><div class="a" style="left:1307.95px;top:680.01px;width:5px;height:3.7px;background:#626b7b"></div><div class="a lbl mono" style="left:1229.9px;top:674.25px;width:213.5px">Patch Panel C1</div><div class="a dev" style="left:1229.9px;top:698.35px;width:213.5px;height:28.14px"></div><div class="a hp" style="left:1336.6px;top:700.55px;width:12.8px;height:6.8px"></div><div class="a hp" style="left:1336.6px;top:718.69px;width:12.8px;height:6.8px"></div><div class="a mono" style="left:1434.4px;top:719.49px;width:7px;height:5.5px;background:#374151;border-radius:1px;font-size:4.2px;line-height:5.7px;color:#8fa0b8;text-align:center">2U</div><div class="a" style="left:1231.8px;top:721.59px;width:2.7px;height:2.9px;border-radius:50%;background:#10c98a"></div><div class="a lbl mono" style="left:1229.9px;top:709.42px;width:213.5px">Cache Server C8</div><div class="a dev" style="left:1229.9px;top:726.49px;width:213.5px;height:28.14px"></div><div class="a hp" style="left:1336.6px;top:728.69px;width:12.8px;height:6.8px"></div><div class="a hp" style="left:1336.6px;top:746.83px;width:12.8px;height:6.8px"></div><div class="a mono" style="left:1434.4px;top:747.63px;width:7px;height:5.5px;background:#374151;border-radius:1px;font-size:4.2px;line-height:5.7px;color:#8fa0b8;text-align:center">2U</div><div class="a" style="left:1231.8px;top:749.73px;width:2.7px;height:2.9px;border-radius:50%;background:#10c98a"></div><div class="a lbl mono" style="left:1229.9px;top:737.56px;width:213.5px">DB Server C7</div><div class="a dev" style="left:1229.9px;top:768.7px;width:213.5px;height:14.07px"></div><div class="a hp" style="left:1336.6px;top:769.9px;width:7px;height:4.6px"></div><div class="a hp" style="left:1336.6px;top:776.97px;width:7px;height:4.6px"></div><div class="a" style="left:1231.8px;top:777.87px;width:2.7px;height:2.9px;border-radius:50%;background:#10c98a"></div><div class="a lbl mono" style="left:1229.9px;top:772.74px;width:213.5px">Web Server C6</div><div class="a dev" style="left:1229.9px;top:782.77px;width:213.5px;height:14.07px"></div><div class="a hp" style="left:1336.6px;top:783.97px;width:7px;height:4.6px"></div><div class="a hp" style="left:1336.6px;top:791.04px;width:7px;height:4.6px"></div><div class="a" style="left:1231.8px;top:791.94px;width:2.7px;height:2.9px;border-radius:50%;background:#10c98a"></div><div class="a lbl mono" style="left:1229.9px;top:786.8px;width:213.5px">Web Server C5</div><div class="a dev" style="left:1229.9px;top:796.84px;width:213.5px;height:28.14px"></div><div class="a hp" style="left:1336.6px;top:799.04px;width:12.8px;height:6.8px"></div><div class="a hp" style="left:1336.6px;top:817.18px;width:12.8px;height:6.8px"></div><div class="a mono" style="left:1434.4px;top:817.98px;width:7px;height:5.5px;background:#374151;border-radius:1px;font-size:4.2px;line-height:5.7px;color:#8fa0b8;text-align:center">2U</div><div class="a" style="left:1231.8px;top:820.08px;width:2.7px;height:2.9px;border-radius:50%;background:#10c98a"></div><div class="a lbl mono" style="left:1229.9px;top:807.91px;width:213.5px">App Server C4</div><div class="a dev" style="left:1229.9px;top:824.98px;width:213.5px;height:28.14px"></div><div class="a hp" style="left:1336.6px;top:827.18px;width:12.8px;height:6.8px"></div><div class="a hp" style="left:1336.6px;top:845.32px;width:12.8px;height:6.8px"></div><div class="a mono" style="left:1434.4px;top:846.12px;width:7px;height:5.5px;background:#374151;border-radius:1px;font-size:4.2px;line-height:5.7px;color:#8fa0b8;text-align:center">2U</div><div class="a" style="left:1231.8px;top:848.22px;width:2.7px;height:2.9px;border-radius:50%;background:#10c98a"></div><div class="a lbl mono" style="left:1229.9px;top:836.05px;width:213.5px">App Server C3</div><div class="a dev" style="left:1229.9px;top:853.12px;width:213.5px;height:28.14px"></div><div class="a hp" style="left:1336.6px;top:855.32px;width:12.8px;height:6.8px"></div><div class="a hp" style="left:1336.6px;top:873.46px;width:12.8px;height:6.8px"></div><div class="a mono" style="left:1434.4px;top:874.26px;width:7px;height:5.5px;background:#374151;border-radius:1px;font-size:4.2px;line-height:5.7px;color:#8fa0b8;text-align:center">2U</div><div class="a" style="left:1231.8px;top:876.36px;width:2.7px;height:2.9px;border-radius:50%;background:#10c98a"></div><div class="a lbl mono" style="left:1229.9px;top:864.19px;width:213.5px">App Server C2</div><div class="a dev" style="left:1229.9px;top:881.26px;width:213.5px;height:28.14px"></div><div class="a hp" style="left:1336.6px;top:883.46px;width:12.8px;height:6.8px"></div><div class="a hp" style="left:1336.6px;top:901.6px;width:12.8px;height:6.8px"></div><div class="a mono" style="left:1434.4px;top:902.4px;width:7px;height:5.5px;background:#374151;border-radius:1px;font-size:4.2px;line-height:5.7px;color:#8fa0b8;text-align:center">2U</div><div class="a" style="left:1231.8px;top:904.5px;width:2.7px;height:2.9px;border-radius:50%;background:#10c98a"></div><div class="a lbl mono" style="left:1229.9px;top:892.33px;width:213.5px">App Server C1</div><svg class="a" style="left:0;top:0" width="1920" height="948"><path d="M547.2,545.08 C547.2,448.65 653.5,714.27 653.5,883.46" fill="none" stroke="#00ffff" stroke-width="1.5"/><path d="M547.2,570.22 C547.2,739.31 653.5,1004.8 653.5,908.4" fill="none" stroke="#00ffff" stroke-width="1.5"/><path d="M559.83,545.08 C559.83,452.75 653.5,700.2 653.5,855.32" fill="none" stroke="#00ffff" stroke-width="1.5"/><path d="M559.83,570.22 C559.83,725.24 653.5,972.56 653.5,880.26" fill="none" stroke="#00ffff" stroke-width="1.5"/><path d="M572.46,545.08 C572.46,457.03 653.5,686.13 653.5,827.18" fill="none" stroke="#00ffff" stroke-width="1.5"/><path d="M572.46,570.22 C572.46,711.17 653.5,940.14 653.5,852.12" fill="none" stroke="#00ffff" stroke-width="1.5"/><path d="M585.09,545.08 C585.09,461.54 653.5,672.06 653.5,799.04" fill="none" stroke="#00ffff" stroke-width="1.5"/><path d="M585.09,570.22 C585.09,697.1 653.5,907.49 653.5,823.98" fill="none" stroke="#00ffff" stroke-width="1.5"/><path d="M597.72,545.08 C597.72,466.3 653.5,657.99 653.5,770.9" fill="none" stroke="#00ffff" stroke-width="1.5"/><path d="M597.72,570.22 C597.72,683.03 653.5,874.58 653.5,795.84" fill="none" stroke="#00ffff" stroke-width="1.5"/><path d="M610.35,545.08 C610.35,471.38 653.5,643.92 653.5,742.76" fill="none" stroke="#00ffff" stroke-width="1.5"/><path d="M610.35,570.22 C610.35,668.96 653.5,841.37 653.5,767.7" fill="none" stroke="#00ffff" stroke-width="1.5"/><path d="M622.98,545.08 C622.98,476.82 653.5,629.85 653.5,714.62" fill="none" stroke="#00ffff" stroke-width="1.5"/><path d="M622.98,570.22 C622.98,654.89 653.5,807.78 653.5,739.56" fill="none" stroke="#00ffff" stroke-width="1.5"/><path d="M660.87,545.08 C660.87,492.87 653.5,594.67 653.5,644.27" fill="none" stroke="#00ffff" stroke-width="1.5"/><path d="M660.87,570.22 C660.87,619.72 653.5,721.37 653.5,669.21" fill="none" stroke="#00ffff" stroke-width="1.5"/><path d="M673.5,545.08 C673.5,500.89 653.5,580.61 653.5,616.13" fill="none" stroke="#00ffff" stroke-width="1.5"/><path d="M673.5,570.22 C673.5,605.64 653.5,685.19 653.5,641.07" fill="none" stroke="#00ffff" stroke-width="1.5"/><path d="M686.13,545.08 C686.13,505.51 653.5,573.57 653.5,602.06" fill="none" stroke="#00ffff" stroke-width="1.5"/><path d="M686.13,570.22 C686.13,591.58 653.5,647.19 653.5,612.93" fill="none" stroke="#00ffff" stroke-width="1.5"/><path d="M884.7,573.22 C884.7,480.89 991,728.34 991,883.46" fill="none" stroke="#00ffff" stroke-width="1.5"/><path d="M884.7,598.36 C884.7,753.38 991,1000.7 991,908.4" fill="none" stroke="#00ffff" stroke-width="1.5"/><path d="M897.33,573.22 C897.33,485.17 991,714.27 991,855.32" fill="none" stroke="#00ffff" stroke-width="1.5"/><path d="M897.33,598.36 C897.33,739.31 991,968.28 991,880.26" fill="none" stroke="#00ffff" stroke-width="1.5"/><path d="M909.96,573.22 C909.96,489.68 991,700.2 991,827.18" fill="none" stroke="#00ffff" stroke-width="1.5"/><path d="M909.96,598.36 C909.96,725.24 991,935.63 991,852.12" fill="none" stroke="#00ffff" stroke-width="1.5"/><path d="M922.59,573.22 C922.59,494.44 991,686.13 991,799.04" fill="none" stroke="#00ffff" stroke-width="1.5"/><path d="M922.59,598.36 C922.59,711.17 991,902.72 991,823.98" fill="none" stroke="#00ffff" stroke-width="1.5"/><path d="M935.22,573.22 C935.22,499.52 991,672.06 991,770.9" fill="none" stroke="#00ffff" stroke-width="1.5"/><path d="M935.22,598.36 C935.22,697.1 991,869.51 991,795.84" fill="none" stroke="#00ffff" stroke-width="1.5"/><path d="M947.85,573.22 C947.85,504.96 991,657.99 991,742.76" fill="none" stroke="#00ffff" stroke-width="1.5"/><path d="M947.85,598.36 C947.85,683.03 991,835.92 991,767.7" fill="none" stroke="#00ffff" stroke-width="1.5"/><path d="M985.74,573.22 C985.74,521.01 991,622.82 991,672.41" fill="none" stroke="#00ffff" stroke-width="1.5"/><path d="M985.74,598.36 C985.74,647.85 991,749.51 991,697.35" fill="none" stroke="#00ffff" stroke-width="1.5"/><path d="M998.37,573.22 C998.37,529.03 991,608.75 991,644.27" fill="none" stroke="#00ffff" stroke-width="1.5"/><path d="M998.37,598.36 C998.37,633.78 991,713.33 991,669.21" fill="none" stroke="#00ffff" stroke-width="1.5"/><path d="M1236.7,629.5 C1236.7,545.96 1343,756.48 1343,883.46" fill="none" stroke="#00ffff" stroke-width="1.5"/><path d="M1236.7,654.64 C1236.7,781.52 1343,991.91 1343,908.4" fill="none" stroke="#00ffff" stroke-width="1.5"/><path d="M1249.33,629.5 C1249.33,550.72 1343,742.41 1343,855.32" fill="none" stroke="#00ffff" stroke-width="1.5"/><path d="M1249.33,654.64 C1249.33,767.45 1343,959 1343,880.26" fill="none" stroke="#00ffff" stroke-width="1.5"/><path d="M1261.96,629.5 C1261.96,555.8 1343,728.34 1343,827.18" fill="none" stroke="#00ffff" stroke-width="1.5"/><path d="M1261.96,654.64 C1261.96,753.38 1343,925.79 1343,852.12" fill="none" stroke="#00ffff" stroke-width="1.5"/><path d="M1274.59,629.5 C1274.59,561.24 1343,714.27 1343,799.04" fill="none" stroke="#00ffff" stroke-width="1.5"/><path d="M1274.59,654.64 C1274.59,739.31 1343,892.2 1343,823.98" fill="none" stroke="#00ffff" stroke-width="1.5"/><path d="M1312.48,629.5 C1312.48,577.29 1343,679.1 1343,728.69" fill="none" stroke="#00ffff" stroke-width="1.5"/><path d="M1312.48,654.64 C1312.48,704.13 1343,805.79 1343,753.63" fill="none" stroke="#00ffff" stroke-width="1.5"/><path d="M1325.11,629.5 C1325.11,585.31 1343,665.02 1343,700.55" fill="none" stroke="#00ffff" stroke-width="1.5"/><path d="M1325.11,654.64 C1325.11,690.07 1343,769.61 1343,725.49" fill="none" stroke="#00ffff" stroke-width="1.5"/><path d="M698.76,545.08 C698.76,517.27 1036.26,559.15 1036.26,573.22" fill="none" stroke="#ffff00" stroke-width="1.6"/><path d="M698.76,570.22 C698.76,584.29 1036.26,626.17 1036.26,598.36" fill="none" stroke="#ffff00" stroke-width="1.6"/><path d="M724.02,545.08 C724.02,496.91 1413.52,587.29 1413.52,629.5" fill="none" stroke="#ffff00" stroke-width="1.6"/><path d="M724.02,570.22 C724.02,612.43 1413.52,702.81 1413.52,654.64" fill="none" stroke="#ffff00" stroke-width="1.6"/><path d="M1048.89,573.22 C1048.89,533.89 1400.89,601.36 1400.89,629.5" fill="none" stroke="#ffff00" stroke-width="1.6"/><path d="M1048.89,598.36 C1048.89,626.5 1400.89,693.97 1400.89,654.64" fill="none" stroke="#ffff00" stroke-width="1.6"/></svg><div class="a" style="left:16.3px;top:173.3px;width:378.5px;height:61.2px;background:#2a2a2a;border:1px solid #3a3a3a;border-radius:8px"></div><div class="a btn" style="left:29.2px;top:185.8px;width:87.7px;height:36px;line-height:34px">Add Node</div><div class="a btn" style="left:125px;top:185.8px;width:57.9px;height:36px;line-height:34px">Save</div><div class="a btn" style="left:190.8px;top:185.8px;width:62.95px;height:36px;line-height:34px">Reset</div><div class="a btn" style="left:262px;top:185.8px;width:120px;height:36px;line-height:34px;text-align:left;padding-left:16px">Dark Mode<svg style="position:absolute;left:105px;top:14px" width="11" height="9"><path d="M1.3 2 L5.3 6 L9.3 2" stroke="#e5e7eb" stroke-width="2" fill="none"/></svg></div><div class="a btn" style="left:1779px;top:167.3px;width:131px;height:33.5px;line-height:32px;border-color:#4b5b6e">Download Image</div><div class="a" style="left:15px;top:826px;width:26px;height:108px;background:#2b2b2b;box-shadow:0 0 2px rgba(0,0,0,.3)"></div><div class="a" style="left:15px;top:852.4px;width:26px;height:1px;background:#3d3d3d"></div><div class="a" style="left:15px;top:879.4px;width:26px;height:1px;background:#3d3d3d"></div><div class="a" style="left:15px;top:906.4px;width:26px;height:1px;background:#3d3d3d"></div><div class="a" style="left:15px;top:933.4px;width:26px;height:1px;background:#3d3d3d"></div><svg class="a" style="left:15px;top:826px" width="26" height="108"><path d="M13 7.2 V18.8 M7.2 13 H18.8" stroke="#000" stroke-width="1.9"/><path d="M7.2 40 H18.8" stroke="#000" stroke-width="1.9"/><path d="M7.6 64.5 V62.9 Q7.6 61.1 9.4 61.1 H11.4 M14.6 61.1 H16.6 Q18.4 61.1 18.4 62.9 V64.5 M18.4 68 V69.6 Q18.4 71.4 16.6 71.4 H14.6 M11.4 71.4 H9.4 Q7.6 71.4 7.6 69.6 V68" stroke="#000" stroke-width="1.5" fill="none"/><rect x="8.3" y="91.5" width="9.2" height="8.3" rx="1.6" fill="#000"/><path d="M12.6 88.7 Q16 88.2 16.3 91.8" stroke="#000" stroke-width="1.4" fill="none"/><rect x="12.3" y="95" width="1.4" height="1.4" fill="#555"/></svg><div class="a" style="left:1705px;top:784px;width:200px;height:150px;background:#a6a6a6"></div><div class="a" style="left:1711px;top:820px;width:188px;height:78px;background:#2d2d2d;border:0.5px solid #555"></div><div class="a" style="left:1757.8px;top:834.3px;width:1px;height:35.2px;background:#e2e2e2"></div><div class="a" style="left:1760.2px;top:834.3px;width:1px;height:35.2px;background:#e2e2e2"></div><div class="a" style="left:1764px;top:832px;width:21px;height:62px;background:#e2e2e2"></div><div class="a" style="left:1787px;top:836.2px;width:4px;height:33.3px;background:#e2e2e2"></div><div class="a" style="left:1797px;top:832px;width:21px;height:62px;background:#e2e2e2"></div><div class="a" style="left:1823px;top:829.5px;width:4px;height:35px;background:#e2e2e2"></div><div class="a" style="left:1831px;top:824px;width:21px;height:70px;background:#e2e2e2"></div><div class="a" style="left:1861px;top:935px;width:59px;height:13px;background:#151515;border-radius:3px 0 0 0;color:#9a9a9a;font-size:7.8px;line-height:13px;padding-left:4px;white-space:nowrap">react-networks</div><div id="ftr" class="a"></div><div class="a" style="left:735px;top:964px;font-size:13px;color:#939aa6;white-space:nowrap">Copyright &#169; 2025 Matt Pickering &#8226; <span style="text-decoration:underline">Contact for commercial use</span> &#8226;</div><svg class="a" style="left:1117.5px;top:962px" width="14.5" height="14.5" viewBox="0 0 16 16"><path fill="#9ca3af" d="M8 0C3.58 0 0 3.58 0 8c0 3.54 2.29 6.53 5.47 7.59.4.07.55-.17.55-.38 0-.19-.01-.82-.01-1.49-2.01.37-2.53-.49-2.69-.94-.09-.23-.48-.94-.82-1.13-.28-.15-.68-.52-.01-.53.63-.01 1.08.58 1.23.82.72 1.21 1.87.87 2.33.66.07-.52.28-.87.51-1.07-1.78-.2-3.64-.89-3.64-3.95 0-.87.31-1.59.82-2.15-.08-.2-.36-1.02.08-2.12 0 0 .67-.21 2.2.82.64-.18 1.32-.27 2-.27.68 0 1.36.09 2 .27 1.53-1.04 2.2-.82 2.2-.82.44 1.1.16 1.92.08 2.12.51.56.82 1.27.82 2.15 0 3.07-1.87 3.75-3.65 3.95.29.25.54.73.54 1.48 0 1.07-.01 1.93-.01 2.2 0 .21.15.46.55.38A8.013 8.013 0 0016 8c0-4.42-3.58-8-8-8z"/></svg><div class="a" style="left:1138px;top:964px;font-size:13px;color:#939aa6">GitHub</div></body></html>
